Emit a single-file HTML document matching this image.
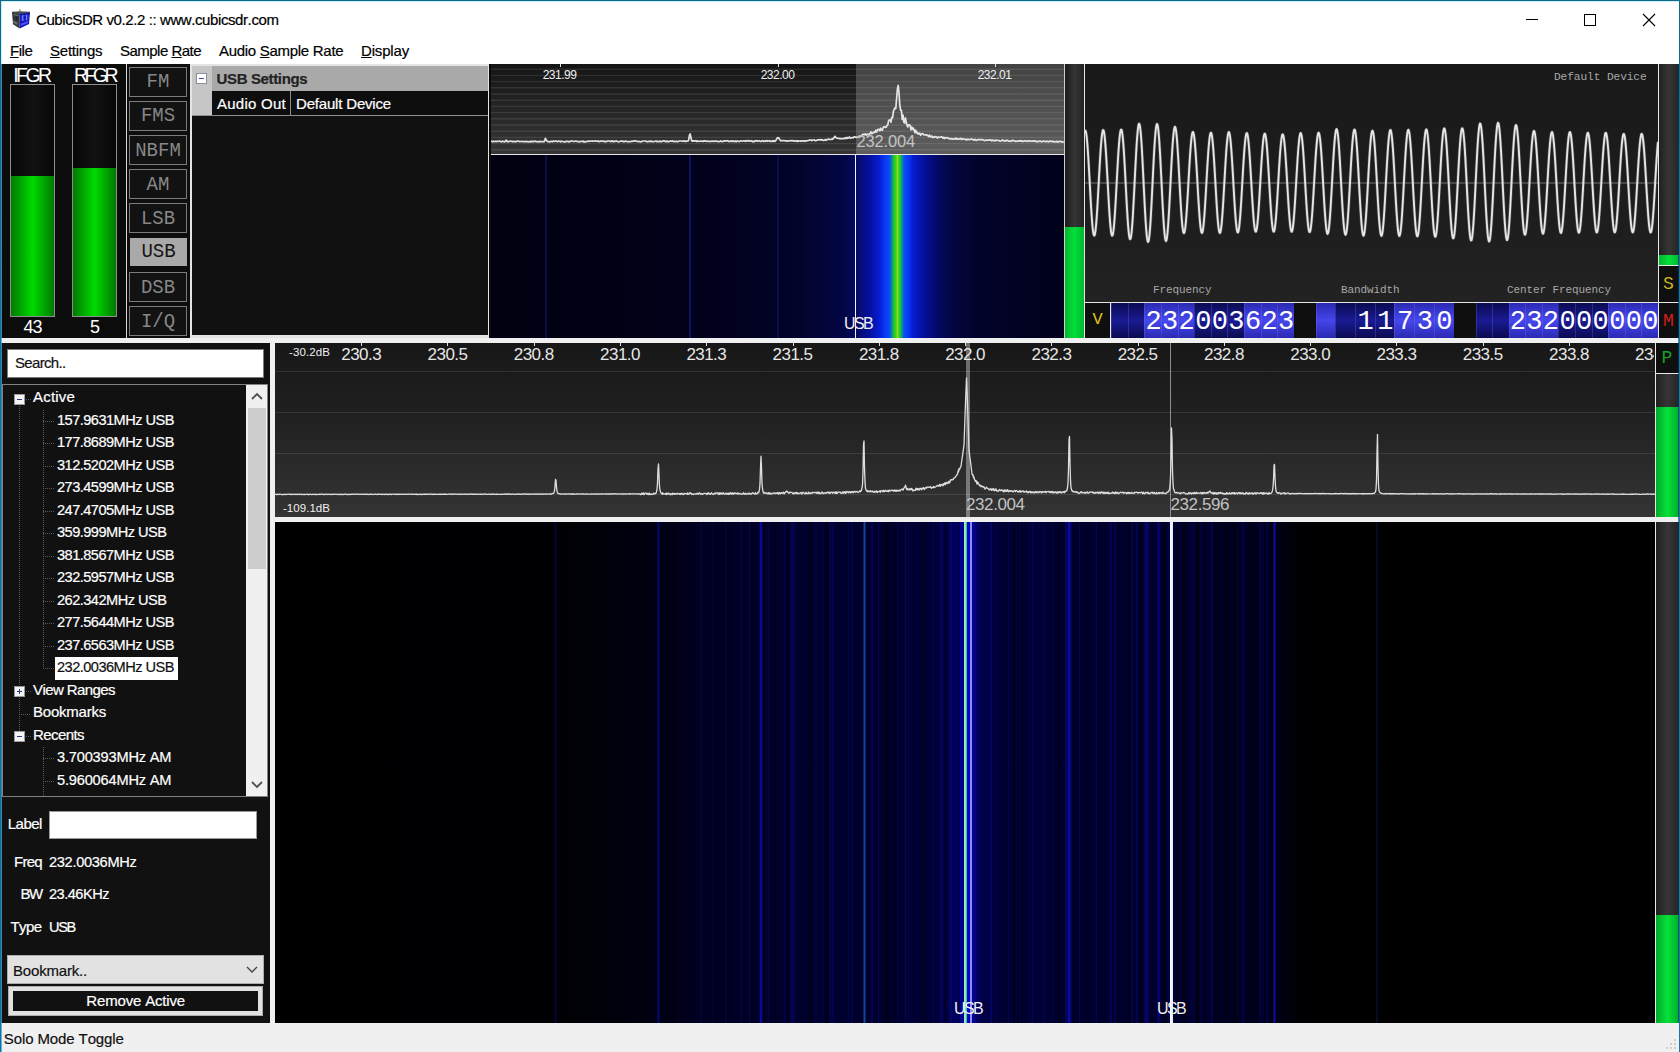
<!DOCTYPE html><html><head><meta charset="utf-8"><title>CubicSDR</title><style>
*{box-sizing:border-box;margin:0;padding:0}
html,body{width:1680px;height:1052px;overflow:hidden;background:#fff}
body{position:relative;font-family:"Liberation Sans",sans-serif;font-size:14px;color:#000}
.a{position:absolute}
.ui{font-family:"Liberation Sans",sans-serif;font-size:14.3px;letter-spacing:-0.35px;white-space:nowrap;font-kerning:none;-webkit-text-stroke:0.2px currentColor}
.mono{font-family:"Liberation Mono",monospace;white-space:nowrap}
.gl{font-family:"Liberation Sans",sans-serif;white-space:nowrap}
.ui span.u{text-decoration:underline}
.mb{position:absolute;left:129px;width:58px;height:30px;border:1px solid #7b7b7b;color:#878787;
 font-family:"Liberation Mono",monospace;font-size:19px;line-height:28px;text-align:center;background:#121212}
.mb.sel{background:#a9a9a9;color:#141414;border-color:#a9a9a9;left:130px;width:57px;height:28.4px;line-height:27px}
.ti{position:absolute;left:0;height:22.5px;line-height:22px;color:#fff}
.dig{position:absolute;top:0;height:34px;text-align:center;color:#fff;font-family:"Liberation Mono",monospace;
 font-size:27px;line-height:38px;border-left:1px solid rgba(120,120,255,.28)}
.dk{background:linear-gradient(#0b0b52,#1a1a92 50%,#0b0b52)}
.lt{background:linear-gradient(#2a2ab2,#4747ee 50%,#2a2ab2)}
.hv{background:linear-gradient(#2a2ab2,#4545ea 50%,#2a2ab2)}
.lab{position:absolute;color:#a8a8a8;font-family:"Liberation Mono",monospace;font-size:11px;letter-spacing:-0.1px;white-space:nowrap}
.fl{position:absolute;color:#e6e6e6;font-family:"Liberation Sans",sans-serif;font-size:17px;letter-spacing:-0.55px;white-space:nowrap;transform:translateX(-50%)}
.sfl{position:absolute;color:#f0f0f0;font-family:"Liberation Sans",sans-serif;font-size:11px;letter-spacing:-0.4px;white-space:nowrap;transform:translateX(-50%)}
</style></head><body>
<div class="a" style="left:0;top:0;width:1680px;height:1052px;background:#fff"></div>
<svg class="a" style="left:11px;top:8px" width="20" height="22" viewBox="0 0 20 22">
<rect x="8.4" y="1" width="1.1" height="3.6" fill="#8c7c7c"/>
<polygon points="1,3.8 9,3.2 19,3.8 19,5.4 8.6,6.6 1,5.4" fill="#4b4f51"/>
<polygon points="1,4.6 8.6,6.1 8.6,20.6 2,16.2" fill="#33373a"/>
<polygon points="2.6,6.1 7.4,7 7.4,8 2.6,7.1" fill="#8a9496" opacity=".75"/>
<polygon points="2.2,12.6 6.4,14.6 6.4,17 2.4,14.8" fill="#777b7d" opacity=".8"/>
<rect x="4.6" y="8.6" width="1.6" height="3.4" fill="#1c1e22"/>
<polygon points="8.6,6.1 19,4.6 18,16 8.6,20.6" fill="#1212a6"/>
<polygon points="9.6,7.5 17.8,6.4 17.5,12 9.6,13" fill="#2636d8"/>
<rect x="11.3" y="7.2" width="1.2" height="5.6" fill="#7f99ff"/>
<rect x="14.9" y="6.8" width="1.1" height="5.4" fill="#6f8cff"/>
<rect x="12.6" y="8.3" width="2.2" height="3.2" fill="#1616b4"/>
<polygon points="9.6,15.6 17.3,12.8 17.2,15 9.6,18.2" fill="#4a4aff"/>
</svg>
<div class="a ui" style="left:36px;top:10px;font-size:15px;letter-spacing:-0.407px;line-height:20px;color:#000;">CubicSDR v0.2.2 :: www.cubicsdr.com</div>
<div class="a" style="left:1526px;top:19px;width:12px;height:1px;background:#000"></div>
<div class="a" style="left:1584px;top:14px;width:12px;height:12px;border:1px solid #000"></div>
<svg class="a" style="left:1642px;top:13px" width="14" height="14" viewBox="0 0 14 14"><path d="M1 1 L13 13 M13 1 L1 13" stroke="#000" stroke-width="1.1" fill="none"/></svg>
<div class="a ui" style="left:10px;top:41px;font-size:15px;letter-spacing:-0.468px;line-height:20px;color:#000;text-underline-offset:1px;"><span class="u">F</span>ile</div>
<div class="a ui" style="left:50px;top:41px;font-size:15px;letter-spacing:-0.237px;line-height:20px;color:#000;text-underline-offset:1px;"><span class="u">S</span>ettings</div>
<div class="a ui" style="left:120px;top:41px;font-size:15px;letter-spacing:-0.519px;line-height:20px;color:#000;text-underline-offset:1px;">Sample <span class="u">R</span>ate</div>
<div class="a ui" style="left:219px;top:41px;font-size:15px;letter-spacing:-0.291px;line-height:20px;color:#000;text-underline-offset:1px;">Audio <span class="u">S</span>ample Rate</div>
<div class="a ui" style="left:361px;top:41px;font-size:15px;letter-spacing:-0.169px;line-height:20px;color:#000;text-underline-offset:1px;"><span class="u">D</span>isplay</div>
<div class="a" style="left:1px;top:64px;width:1678px;height:274px;background:#0f0f0f"></div>
<div class="a" style="left:1px;top:64px;width:125px;height:274px;background:#0c0c0c"></div>
<div class="a" style="left:126px;top:64px;width:1px;height:274px;background:#d8d8d8"></div>
<div class="a gl" style="left:13.2px;top:64px;color:#fff;font-size:19.5px;letter-spacing:-2.52px;line-height:22px;font-kerning:none">IFGR</div>
<div class="a" style="left:10px;top:84px;width:45px;height:233px;border:1px solid #8e8e8e;background:linear-gradient(90deg,#070707,#121212 50%,#070707)"></div>
<div class="a" style="left:11px;top:176px;width:43px;height:140px;background:linear-gradient(90deg,#017a01,#00da00 50%,#017a01)"></div>
<div class="a gl" style="left:12.5px;top:316px;width:40px;text-align:center;color:#fff;font-size:18px;letter-spacing:-1px;line-height:22px">43</div>
<div class="a gl" style="left:74px;top:64px;color:#fff;font-size:19.5px;letter-spacing:-3.56px;line-height:22px;font-kerning:none">RFGR</div>
<div class="a" style="left:72px;top:84px;width:45px;height:233px;border:1px solid #8e8e8e;background:linear-gradient(90deg,#070707,#121212 50%,#070707)"></div>
<div class="a" style="left:73px;top:168px;width:43px;height:148px;background:linear-gradient(90deg,#017a01,#00da00 50%,#017a01)"></div>
<div class="a gl" style="left:74.5px;top:316px;width:40px;text-align:center;color:#fff;font-size:18px;letter-spacing:-1px;line-height:22px">5</div>
<div class="a" style="left:127px;top:64px;width:63px;height:274px;background:#0e0e0e"></div>
<div class="mb" style="top:66.5px"><span style="display:inline-block;transform:scaleY(1.1)">FM</span></div>
<div class="mb" style="top:100.7px"><span style="display:inline-block;transform:scaleY(1.1)">FMS</span></div>
<div class="mb" style="top:134.9px"><span style="display:inline-block;transform:scaleY(1.1)">NBFM</span></div>
<div class="mb" style="top:169.1px"><span style="display:inline-block;transform:scaleY(1.1)">AM</span></div>
<div class="mb" style="top:203.3px"><span style="display:inline-block;transform:scaleY(1.1)">LSB</span></div>
<div class="mb sel" style="top:237.5px"><span style="display:inline-block;transform:scaleY(1.1)">USB</span></div>
<div class="mb" style="top:271.7px"><span style="display:inline-block;transform:scaleY(1.1)">DSB</span></div>
<div class="mb" style="top:305.9px"><span style="display:inline-block;transform:scaleY(1.1)">I/Q</span></div>
<div class="a" style="left:190px;top:64px;width:300px;height:274px;background:#e4e4e4"></div>
<div class="a" style="left:192px;top:66px;width:296px;height:269px;background:#111"></div>
<div class="a" style="left:192px;top:66px;width:20px;height:49px;background:#c6c6c6"></div>
<div class="a" style="left:212px;top:66px;width:276px;height:25px;background:#a9a9a9"></div>
<div class="a" style="left:196px;top:73px;width:11px;height:11px;border:1px solid #8a8fa0;background:#fff"></div>
<div class="a" style="left:199px;top:78px;width:5px;height:1px;background:#3c4a9a"></div>
<div class="a ui" style="left:216.5px;top:68px;font-size:15px;letter-spacing:-0.351px;line-height:21px;color:#222;font-weight:bold;">USB Settings</div>
<div class="a" style="left:212px;top:91px;width:276px;height:24px;background:#0e0e0e"></div>
<div class="a" style="left:192px;top:115px;width:296px;height:1px;background:#8e8e8e"></div>
<div class="a" style="left:290px;top:91px;width:1px;height:24px;background:#8e8e8e"></div>
<div class="a ui" style="left:217px;top:93px;font-size:15px;letter-spacing:0.255px;line-height:21px;color:#fff;">Audio Out</div>
<div class="a ui" style="left:296px;top:93px;font-size:15px;letter-spacing:-0.182px;line-height:21px;color:#fff;">Default Device</div>
<div class="a" style="left:489px;top:64px;width:2px;height:274px;background:#0a0a0a"></div>
<div class="a" style="left:491px;top:64px;width:573px;height:91px;background:repeating-linear-gradient(180deg,rgba(255,255,255,0) 0px,rgba(255,255,255,0) 4.2px,rgba(255,255,255,.095) 4.9px,rgba(255,255,255,.095) 5.6px,rgba(255,255,255,0) 6.2px),linear-gradient(180deg,#151515,#363636)"></div>
<div class="a" style="left:856px;top:64px;width:208px;height:91px;background:rgba(255,255,255,.2)"></div>
<svg class="a" style="left:491px;top:64px" width="573" height="91" viewBox="0 0 573 91"><path d="M0.0 77.4 L0.8 77.3 L1.6 77.7 L2.4 77.2 L3.2 77.6 L4.0 77.5 L4.8 77.2 L5.6 77.6 L6.4 77.2 L7.2 77.5 L8.0 77.2 L8.8 77.2 L9.6 77.5 L10.4 77.9 L11.2 77.2 L12.0 77.3 L12.8 77.7 L13.6 77.9 L14.4 76.8 L15.2 76.1 L16.0 77.7 L16.8 77.1 L17.6 77.9 L18.4 77.4 L19.2 77.2 L20.0 77.2 L20.8 77.4 L21.6 77.8 L22.4 77.3 L23.2 77.6 L24.0 77.7 L24.8 77.4 L25.6 77.6 L26.4 77.2 L27.2 77.1 L28.0 77.3 L28.8 77.7 L29.6 77.5 L30.4 77.4 L31.2 77.6 L32.0 77.5 L32.8 77.4 L33.6 77.8 L34.4 77.7 L35.2 77.3 L36.0 77.6 L36.8 77.6 L37.6 77.9 L38.4 77.7 L39.2 77.3 L40.0 78.0 L40.8 77.2 L41.6 77.4 L42.4 77.8 L43.2 77.2 L44.0 77.5 L44.8 77.1 L45.6 77.7 L46.4 77.8 L47.2 77.6 L48.0 77.9 L48.8 77.3 L49.6 77.7 L50.4 77.6 L51.2 77.6 L52.0 77.5 L52.8 77.8 L53.6 77.0 L54.4 74.3 L55.2 76.2 L56.0 77.0 L56.8 77.7 L57.6 77.6 L58.4 77.9 L59.2 77.8 L60.0 77.3 L60.8 77.4 L61.6 77.6 L62.4 77.0 L63.2 77.4 L64.0 77.2 L64.8 77.1 L65.6 77.1 L66.4 77.7 L67.2 77.1 L68.0 77.2 L68.8 77.4 L69.6 77.8 L70.4 77.1 L71.2 77.4 L72.0 77.5 L72.8 77.8 L73.6 77.8 L74.4 77.8 L75.2 77.2 L76.0 77.4 L76.8 77.3 L77.6 77.8 L78.4 77.9 L79.2 77.1 L80.0 77.1 L80.8 77.2 L81.6 77.2 L82.4 77.4 L83.2 77.5 L84.0 77.2 L84.8 77.0 L85.6 77.4 L86.4 77.3 L87.2 77.5 L88.0 77.9 L88.8 77.6 L89.6 77.4 L90.4 77.5 L91.2 77.6 L92.0 77.0 L92.8 77.8 L93.6 77.7 L94.4 77.8 L95.2 77.7 L96.0 77.3 L96.8 77.3 L97.6 77.0 L98.4 77.5 L99.2 77.0 L100.0 77.0 L100.8 77.1 L101.6 77.1 L102.4 77.3 L103.2 77.0 L104.0 76.9 L104.8 77.1 L105.6 77.0 L106.4 77.3 L107.2 76.9 L108.0 77.7 L108.8 77.5 L109.6 77.1 L110.4 77.2 L111.2 77.2 L112.0 77.3 L112.8 77.0 L113.6 77.7 L114.4 77.8 L115.2 77.3 L116.0 77.4 L116.8 77.0 L117.6 77.0 L118.4 77.2 L119.2 77.1 L120.0 77.7 L120.8 77.0 L121.6 76.9 L122.4 77.8 L123.2 77.4 L124.0 77.0 L124.8 77.4 L125.6 76.9 L126.4 77.4 L127.2 77.8 L128.0 77.7 L128.8 77.5 L129.6 77.1 L130.4 77.2 L131.2 77.0 L132.0 77.6 L132.8 77.4 L133.6 77.6 L134.4 77.2 L135.2 77.1 L136.0 77.6 L136.8 77.8 L137.6 77.7 L138.4 77.6 L139.2 77.6 L140.0 77.6 L140.8 77.1 L141.6 77.3 L142.4 77.2 L143.2 76.9 L144.0 76.9 L144.8 77.1 L145.6 77.1 L146.4 77.5 L147.2 77.7 L148.0 77.3 L148.8 77.7 L149.6 77.8 L150.4 77.7 L151.2 77.2 L152.0 77.0 L152.8 77.0 L153.6 77.0 L154.4 77.0 L155.2 77.4 L156.0 77.7 L156.8 77.6 L157.6 77.3 L158.4 77.4 L159.2 77.6 L160.0 76.9 L160.8 77.4 L161.6 77.7 L162.4 77.6 L163.2 77.5 L164.0 77.3 L164.8 77.0 L165.6 77.6 L166.4 77.1 L167.2 77.6 L168.0 77.7 L168.8 77.2 L169.6 77.2 L170.4 77.7 L171.2 77.5 L172.0 76.9 L172.8 76.9 L173.6 76.9 L174.4 77.7 L175.2 77.6 L176.0 76.9 L176.8 77.6 L177.6 77.7 L178.4 77.4 L179.2 77.1 L180.0 77.3 L180.8 76.9 L181.6 76.8 L182.4 77.7 L183.2 77.4 L184.0 77.3 L184.8 77.7 L185.6 77.2 L186.4 77.6 L187.2 77.6 L188.0 77.0 L188.8 77.0 L189.6 77.0 L190.4 77.0 L191.2 77.3 L192.0 77.0 L192.8 77.1 L193.6 76.9 L194.4 77.6 L195.2 77.1 L196.0 77.2 L196.8 77.2 L197.6 76.4 L198.4 71.4 L199.2 69.9 L200.0 74.1 L200.8 76.9 L201.6 77.2 L202.4 76.7 L203.2 77.1 L204.0 76.9 L204.8 76.7 L205.6 77.5 L206.4 76.9 L207.2 77.2 L208.0 77.4 L208.8 77.2 L209.6 77.0 L210.4 77.2 L211.2 77.2 L212.0 77.5 L212.8 76.8 L213.6 77.2 L214.4 76.9 L215.2 77.0 L216.0 77.4 L216.8 77.2 L217.6 77.2 L218.4 77.4 L219.2 77.6 L220.0 77.1 L220.8 77.3 L221.6 77.2 L222.4 77.2 L223.2 77.4 L224.0 77.1 L224.8 77.2 L225.6 77.1 L226.4 77.6 L227.2 77.4 L228.0 77.5 L228.8 77.6 L229.6 76.9 L230.4 77.2 L231.2 77.6 L232.0 77.5 L232.8 76.8 L233.6 76.8 L234.4 77.1 L235.2 76.7 L236.0 76.9 L236.8 76.7 L237.6 77.3 L238.4 77.4 L239.2 77.5 L240.0 76.8 L240.8 77.3 L241.6 77.3 L242.4 76.8 L243.2 77.5 L244.0 77.6 L244.8 76.8 L245.6 77.6 L246.4 77.0 L247.2 77.1 L248.0 77.6 L248.8 77.4 L249.6 76.8 L250.4 77.0 L251.2 77.1 L252.0 77.0 L252.8 76.8 L253.6 76.9 L254.4 77.3 L255.2 76.6 L256.0 77.2 L256.8 77.0 L257.6 76.6 L258.4 76.9 L259.2 77.2 L260.0 77.1 L260.8 76.7 L261.6 77.6 L262.4 77.4 L263.2 77.6 L264.0 76.7 L264.8 76.9 L265.6 76.6 L266.4 77.4 L267.2 76.9 L268.0 76.7 L268.8 77.0 L269.6 77.5 L270.4 77.4 L271.2 76.8 L272.0 76.7 L272.8 77.5 L273.6 77.1 L274.4 77.3 L275.2 76.7 L276.0 76.6 L276.8 77.3 L277.6 77.0 L278.4 76.6 L279.2 77.5 L280.0 77.2 L280.8 77.4 L281.6 76.6 L282.4 77.4 L283.2 76.6 L284.0 77.3 L284.8 76.5 L285.6 75.1 L286.4 73.8 L287.2 73.7 L288.0 74.3 L288.8 75.6 L289.6 76.8 L290.4 76.7 L291.2 76.6 L292.0 76.7 L292.8 76.6 L293.6 76.7 L294.4 76.8 L295.2 76.8 L296.0 77.3 L296.8 76.8 L297.6 77.0 L298.4 76.7 L299.2 76.9 L300.0 76.5 L300.8 76.8 L301.6 76.5 L302.4 77.2 L303.2 77.1 L304.0 76.7 L304.8 77.0 L305.6 77.4 L306.4 76.6 L307.2 77.3 L308.0 76.9 L308.8 77.0 L309.6 77.3 L310.4 76.8 L311.2 76.9 L312.0 77.1 L312.8 77.3 L313.6 76.6 L314.4 77.1 L315.2 76.9 L316.0 76.8 L316.8 76.5 L317.6 76.4 L318.4 76.1 L319.2 76.1 L320.0 76.0 L320.8 76.7 L321.6 76.1 L322.4 76.0 L323.2 75.9 L324.0 76.7 L324.8 76.7 L325.6 76.4 L326.4 75.9 L327.2 75.9 L328.0 75.9 L328.8 76.0 L329.6 75.6 L330.4 75.9 L331.2 75.7 L332.0 76.5 L332.8 76.5 L333.6 75.9 L334.4 75.5 L335.2 76.3 L336.0 75.5 L336.8 75.5 L337.6 75.0 L338.4 75.5 L339.2 75.5 L340.0 75.5 L340.8 75.0 L341.6 75.3 L342.4 74.2 L343.2 73.5 L344.0 72.3 L344.8 73.5 L345.6 74.0 L346.4 74.2 L347.2 74.5 L348.0 74.3 L348.8 74.7 L349.6 74.6 L350.4 74.8 L351.2 74.6 L352.0 74.6 L352.8 74.8 L353.6 74.0 L354.4 73.8 L355.2 74.7 L356.0 73.4 L356.8 74.2 L357.6 74.0 L358.4 72.9 L359.2 74.1 L360.0 74.1 L360.8 73.6 L361.6 73.7 L362.4 73.8 L363.2 72.6 L364.0 73.1 L364.8 73.0 L365.6 73.4 L366.4 73.2 L367.2 73.0 L368.0 72.4 L368.8 72.8 L369.6 72.2 L370.4 72.0 L371.2 70.9 L372.0 70.3 L372.8 70.3 L373.6 70.6 L374.4 69.8 L375.2 71.2 L376.0 70.4 L376.8 70.3 L377.6 70.2 L378.4 70.1 L379.2 69.4 L380.0 67.9 L380.8 69.7 L381.6 69.3 L382.4 68.3 L383.2 68.2 L384.0 68.3 L384.8 66.2 L385.6 68.0 L386.4 66.1 L387.2 65.2 L388.0 65.6 L388.8 66.8 L389.6 64.2 L390.4 65.9 L391.2 66.4 L392.0 63.9 L392.8 62.8 L393.6 62.8 L394.4 63.3 L395.2 63.2 L396.0 61.5 L396.8 60.8 L397.6 56.6 L398.4 56.0 L399.2 55.8 L400.0 58.2 L400.8 53.3 L401.6 53.6 L402.4 47.4 L403.2 45.5 L404.0 43.9 L404.8 44.5 L405.6 34.7 L406.4 25.2 L407.2 21.4 L408.0 29.0 L408.8 41.0 L409.6 46.1 L410.4 46.4 L411.2 55.4 L412.0 51.2 L412.8 58.2 L413.6 59.0 L414.4 53.9 L415.2 58.0 L416.0 61.2 L416.8 62.9 L417.6 60.8 L418.4 60.9 L419.2 61.5 L420.0 65.8 L420.8 63.0 L421.6 65.3 L422.4 64.2 L423.2 66.4 L424.0 68.7 L424.8 66.2 L425.6 69.0 L426.4 68.5 L427.2 70.1 L428.0 70.0 L428.8 69.2 L429.6 71.3 L430.4 70.4 L431.2 69.5 L432.0 69.6 L432.8 70.9 L433.6 71.0 L434.4 70.8 L435.2 70.7 L436.0 71.3 L436.8 71.4 L437.6 72.6 L438.4 71.1 L439.2 72.7 L440.0 73.0 L440.8 71.9 L441.6 73.4 L442.4 73.1 L443.2 73.5 L444.0 72.5 L444.8 72.8 L445.6 72.9 L446.4 74.0 L447.2 73.4 L448.0 73.1 L448.8 73.3 L449.6 73.1 L450.4 72.8 L451.2 73.0 L452.0 74.2 L452.8 73.4 L453.6 74.5 L454.4 73.5 L455.2 73.7 L456.0 74.1 L456.8 73.7 L457.6 74.0 L458.4 75.0 L459.2 74.9 L460.0 74.9 L460.8 74.6 L461.6 75.1 L462.4 75.2 L463.2 74.7 L464.0 75.0 L464.8 74.1 L465.6 75.1 L466.4 74.7 L467.2 75.2 L468.0 75.1 L468.8 74.7 L469.6 74.4 L470.4 75.6 L471.2 74.6 L472.0 75.1 L472.8 75.0 L473.6 75.0 L474.4 75.6 L475.2 76.0 L476.0 75.1 L476.8 75.7 L477.6 75.3 L478.4 75.6 L479.2 75.5 L480.0 75.2 L480.8 75.2 L481.6 75.3 L482.4 76.2 L483.2 75.7 L484.0 75.4 L484.8 76.3 L485.6 76.4 L486.4 75.8 L487.2 75.5 L488.0 75.6 L488.8 75.5 L489.6 75.8 L490.4 75.5 L491.2 75.7 L492.0 75.8 L492.8 76.2 L493.6 76.6 L494.4 76.4 L495.2 76.1 L496.0 76.1 L496.8 76.3 L497.6 76.1 L498.4 76.1 L499.2 75.8 L500.0 76.1 L500.8 76.9 L501.6 76.0 L502.4 76.4 L503.2 76.6 L504.0 76.9 L504.8 76.2 L505.6 76.3 L506.4 76.3 L507.2 76.5 L508.0 76.5 L508.8 77.1 L509.6 77.0 L510.4 77.0 L511.2 76.1 L512.0 76.2 L512.8 76.9 L513.6 77.1 L514.4 76.7 L515.2 76.8 L516.0 76.2 L516.8 76.6 L517.6 77.2 L518.4 77.1 L519.2 77.2 L520.0 77.3 L520.8 76.6 L521.6 76.4 L522.4 76.5 L523.2 76.9 L524.0 77.1 L524.8 77.4 L525.6 77.2 L526.4 77.1 L527.2 77.2 L528.0 76.9 L528.8 77.0 L529.6 76.5 L530.4 77.3 L531.2 76.8 L532.0 77.5 L532.8 77.2 L533.6 76.9 L534.4 76.7 L535.2 76.9 L536.0 77.3 L536.8 77.4 L537.6 76.8 L538.4 76.8 L539.2 77.2 L540.0 77.3 L540.8 77.1 L541.6 77.0 L542.4 77.3 L543.2 76.8 L544.0 77.1 L544.8 77.2 L545.6 77.7 L546.4 77.4 L547.2 77.7 L548.0 77.3 L548.8 77.1 L549.6 77.1 L550.4 77.8 L551.2 77.6 L552.0 77.2 L552.8 77.0 L553.6 77.4 L554.4 77.6 L555.2 77.4 L556.0 77.2 L556.8 77.6 L557.6 77.9 L558.4 77.2 L559.2 77.1 L560.0 77.4 L560.8 77.4 L561.6 77.7 L562.4 77.3 L563.2 77.8 L564.0 77.8 L564.8 77.6 L565.6 77.3 L566.4 78.0 L567.2 77.4 L568.0 77.9 L568.8 77.4 L569.6 77.4 L570.4 77.9 L571.2 77.5 L572.0 78.1 L572.8 77.7" fill="none" stroke="#ececec" stroke-width="1.7" stroke-linejoin="round" opacity=".95"/></svg>
<div class="a" style="left:560px;top:64px;width:1px;height:3px;background:#ddd"></div>
<div class="sfl" style="left:559.5px;top:68px;line-height:14px;font-size:12px;font-kerning:none;letter-spacing:-0.52px">231.99</div>
<div class="a" style="left:778px;top:64px;width:1px;height:3px;background:#ddd"></div>
<div class="sfl" style="left:777.5px;top:68px;line-height:14px;font-size:12px;font-kerning:none;letter-spacing:-0.52px">232.00</div>
<div class="a" style="left:995px;top:64px;width:1px;height:3px;background:#ddd"></div>
<div class="sfl" style="left:994.5px;top:68px;line-height:14px;font-size:12px;font-kerning:none;letter-spacing:-0.52px">232.01</div>
<div class="a gl" style="left:856.5px;top:132px;font-size:16.5px;letter-spacing:-0.16px;line-height:18px;color:#c4c4c4;font-kerning:none">232.004</div>
<div class="a" style="left:491px;top:154px;width:573px;height:1px;background:#e8e8e8"></div>
<div class="a" style="left:491px;top:155px;width:573px;height:183px;background:linear-gradient(90deg,#010112 0.0px,#010116 129.0px,#020222 269.0px,#030430 319.0px,#030646 354.0px,#040a62 365.0px,#0510a0 379.0px,#061cd0 388.0px,#0834f4 393.0px,#0850f0 399.0px,#0a90a0 401.0px,#14c428 402.5px,#58d41c 405.5px,#a4e022 406.3px,#58d41c 407.2px,#14c428 409.5px,#0a90a0 411.0px,#0850f0 413.0px,#0834f4 418.0px,#061cd0 422.0px,#0512a4 431.0px,#040a70 443.0px,#030644 459.0px,#02032c 484.0px,#01011a 573.0px)"></div>
<div class="a" style="left:545px;top:155px;width:2px;height:183px;background:rgba(30,40,160,.35)"></div>
<div class="a" style="left:689px;top:155px;width:2px;height:183px;background:rgba(30,40,170,.45)"></div>
<div class="a" style="left:777px;top:155px;width:2px;height:183px;background:rgba(30,40,170,.3)"></div>
<div class="a" style="left:855px;top:155px;width:1px;height:183px;background:#f2f2f2"></div>
<div class="a gl" style="left:844px;top:315px;font-size:16px;letter-spacing:-1.6px;line-height:18px;color:#f0f0f0">USB</div>
<div class="a" style="left:1064px;top:64px;width:1px;height:274px;background:#cfcfcf"></div>
<div class="a" style="left:1065px;top:64px;width:19px;height:274px;background:linear-gradient(90deg,#1c1c1c,#343434 50%,#222)"></div>
<div class="a" style="left:1065px;top:227px;width:19px;height:111px;background:linear-gradient(90deg,#00b82c,#04de3c 50%,#00b82c)"></div>
<div class="a" style="left:1084px;top:64px;width:1px;height:274px;background:#e6e6e6"></div>
<div class="a" style="left:1085px;top:64px;width:573px;height:238px;background:linear-gradient(180deg,#191919,#1d1d1d 60%,#222222)"></div>
<div class="a" style="left:1085px;top:182px;width:573px;height:1.6px;background:#464646"></div>
<svg class="a" style="left:1085px;top:64px" width="573" height="238" viewBox="0 0 573 238"><path d="M0.0 66.7 L0.5 66.7 L1.0 68.3 L1.5 71.4 L2.0 76.0 L2.5 81.9 L3.0 89.0 L3.5 97.0 L4.0 105.6 L4.5 114.7 L5.0 123.9 L5.5 132.9 L6.0 141.5 L6.5 149.5 L7.0 156.5 L7.5 162.4 L8.0 166.9 L8.5 170.0 L9.0 171.5 L9.5 171.5 L10.0 169.8 L10.5 166.5 L11.0 161.8 L11.5 155.8 L12.0 148.7 L12.5 140.7 L13.0 131.9 L13.5 122.8 L14.0 113.6 L14.5 104.5 L15.0 95.9 L15.5 88.0 L16.0 81.0 L16.5 75.1 L17.0 70.6 L17.5 67.6 L18.0 66.1 L18.5 66.3 L19.0 68.0 L19.5 71.3 L20.0 76.1 L20.5 82.2 L21.0 89.4 L21.5 97.4 L22.0 106.2 L22.5 115.3 L23.0 124.6 L23.5 133.6 L24.0 142.2 L24.5 150.1 L25.0 157.1 L25.5 162.9 L26.0 167.3 L26.5 170.2 L27.0 171.6 L27.5 171.5 L28.0 169.7 L28.5 166.4 L29.0 161.6 L29.5 155.5 L30.0 148.3 L30.5 140.2 L31.0 131.3 L31.5 122.2 L32.0 112.8 L32.5 103.7 L33.0 95.0 L33.5 87.1 L34.0 80.1 L34.5 74.3 L35.0 69.8 L35.5 66.9 L36.0 65.6 L36.5 65.7 L37.0 67.6 L37.5 71.0 L38.0 75.9 L38.5 82.2 L39.0 89.6 L39.5 98.0 L40.0 107.1 L40.5 116.6 L41.0 126.2 L41.5 135.6 L42.0 144.6 L42.5 152.9 L43.0 160.2 L43.5 166.2 L44.0 170.8 L44.5 173.9 L45.0 175.2 L45.5 174.9 L46.0 172.8 L46.5 169.1 L47.0 163.8 L47.5 157.1 L48.0 149.2 L48.5 140.4 L49.0 130.8 L49.5 120.8 L50.0 110.7 L50.5 100.9 L51.0 91.5 L51.5 82.9 L52.0 75.3 L52.5 69.1 L53.0 64.3 L53.5 61.1 L54.0 59.7 L54.5 60.3 L55.0 62.6 L55.5 66.6 L56.0 72.2 L56.5 79.2 L57.0 87.5 L57.5 96.7 L58.0 106.5 L58.5 116.8 L59.0 127.1 L59.5 137.1 L60.0 146.6 L60.5 155.3 L61.0 162.8 L61.5 169.0 L62.0 173.7 L62.5 176.7 L63.0 178.0 L63.5 177.3 L64.0 174.9 L64.5 170.7 L65.0 165.0 L65.5 157.9 L66.0 149.5 L66.5 140.3 L67.0 130.4 L67.5 120.1 L68.0 109.8 L68.5 99.8 L69.0 90.4 L69.5 81.9 L70.0 74.5 L70.5 68.4 L71.0 63.9 L71.5 61.1 L72.0 60.0 L72.5 60.8 L73.0 63.4 L73.5 67.6 L74.0 73.4 L74.5 80.6 L75.0 88.9 L75.5 98.2 L76.0 108.0 L76.5 118.2 L77.0 128.4 L77.5 138.3 L78.0 147.5 L78.5 155.9 L79.0 163.1 L79.5 169.0 L80.0 173.4 L80.5 176.1 L81.0 177.0 L81.5 176.0 L82.0 173.3 L82.5 168.9 L83.0 163.0 L83.5 155.8 L84.0 147.5 L84.5 138.4 L85.0 128.7 L85.5 118.8 L86.0 108.9 L86.5 99.4 L87.0 90.5 L87.5 82.5 L88.0 75.6 L88.5 70.1 L89.0 66.0 L89.5 63.6 L90.0 62.8 L90.5 63.8 L91.0 66.4 L91.5 70.6 L92.0 76.2 L92.5 83.0 L93.0 90.8 L93.5 99.4 L94.0 108.5 L94.5 117.9 L95.0 127.1 L95.5 136.0 L96.0 144.3 L96.5 151.7 L97.0 158.0 L97.5 163.0 L98.0 166.6 L98.5 168.7 L99.0 169.2 L99.5 168.1 L100.0 165.7 L100.5 161.8 L101.0 156.6 L101.5 150.2 L102.0 142.8 L102.5 134.7 L103.0 126.0 L103.5 117.2 L104.0 108.4 L104.5 99.9 L105.0 92.0 L105.5 84.9 L106.0 78.8 L106.5 74.0 L107.0 70.5 L107.5 68.5 L108.0 68.0 L108.5 69.0 L109.0 71.4 L109.5 75.3 L110.0 80.5 L110.5 86.9 L111.0 94.2 L111.5 102.3 L112.0 110.9 L112.5 119.7 L113.0 128.5 L113.5 136.9 L114.0 144.8 L114.5 151.9 L115.0 158.0 L115.5 162.9 L116.0 166.4 L116.5 168.4 L117.0 169.0 L117.5 168.0 L118.0 165.5 L118.5 161.5 L119.0 156.3 L119.5 149.9 L120.0 142.6 L120.5 134.5 L121.0 126.0 L121.5 117.2 L122.0 108.5 L122.5 100.1 L123.0 92.3 L123.5 85.3 L124.0 79.3 L124.5 74.5 L125.0 71.1 L125.5 69.2 L126.0 68.7 L126.5 69.8 L127.0 72.3 L127.5 76.3 L128.0 81.6 L128.5 88.0 L129.0 95.4 L129.5 103.4 L130.0 112.0 L130.5 120.7 L131.0 129.4 L131.5 137.8 L132.0 145.6 L132.5 152.6 L133.0 158.6 L133.5 163.3 L134.0 166.7 L134.5 168.6 L135.0 169.0 L135.5 167.8 L136.0 165.1 L136.5 161.0 L137.0 155.6 L137.5 149.1 L138.0 141.7 L138.5 133.5 L139.0 124.9 L139.5 116.1 L140.0 107.4 L140.5 99.0 L141.0 91.2 L141.5 84.2 L142.0 78.3 L142.5 73.6 L143.0 70.3 L143.5 68.4 L144.0 68.1 L144.5 69.3 L145.0 72.1 L145.5 76.2 L146.0 81.7 L146.5 88.3 L147.0 95.7 L147.5 103.9 L148.0 112.5 L148.5 121.3 L149.0 130.0 L149.5 138.3 L150.0 146.0 L150.5 152.9 L151.0 158.7 L151.5 163.3 L152.0 166.5 L152.5 168.2 L153.0 168.4 L153.5 167.1 L154.0 164.3 L154.5 160.1 L155.0 154.6 L155.5 148.1 L156.0 140.6 L156.5 132.5 L157.0 124.0 L157.5 115.3 L158.0 106.7 L158.5 98.5 L159.0 90.9 L159.5 84.1 L160.0 78.4 L160.5 74.0 L161.0 70.9 L161.5 69.2 L162.0 69.1 L162.5 70.5 L163.0 73.3 L163.5 77.6 L164.0 83.0 L164.5 89.6 L165.0 97.0 L165.5 105.1 L166.0 113.6 L166.5 122.2 L167.0 130.8 L167.5 138.9 L168.0 146.4 L168.5 153.1 L169.0 158.7 L169.5 163.0 L170.0 166.0 L170.5 167.6 L171.0 167.6 L171.5 166.2 L172.0 163.3 L172.5 159.1 L173.0 153.6 L173.5 147.1 L174.0 139.6 L174.5 131.6 L175.0 123.1 L175.5 114.5 L176.0 106.1 L176.5 98.0 L177.0 90.6 L177.5 84.0 L178.0 78.5 L178.5 74.2 L179.0 71.2 L179.5 69.8 L180.0 69.8 L180.5 71.3 L181.0 74.3 L181.5 78.6 L182.0 84.1 L182.5 90.7 L183.0 98.2 L183.5 106.3 L184.0 114.7 L184.5 123.3 L185.0 131.7 L185.5 139.8 L186.0 147.2 L186.5 153.7 L187.0 159.1 L187.5 163.4 L188.0 166.2 L188.5 167.6 L189.0 167.6 L189.5 166.0 L190.0 163.0 L190.5 158.7 L191.0 153.1 L191.5 146.5 L192.0 139.1 L192.5 131.0 L193.0 122.6 L193.5 114.1 L194.0 105.7 L194.5 97.7 L195.0 90.4 L195.5 84.0 L196.0 78.6 L196.5 74.5 L197.0 71.7 L197.5 70.4 L198.0 70.6 L198.5 72.2 L199.0 75.2 L199.5 79.6 L200.0 85.1 L200.5 91.8 L201.0 99.2 L201.5 107.3 L202.0 115.7 L202.5 124.2 L203.0 132.6 L203.5 140.6 L204.0 147.9 L204.5 154.3 L205.0 159.6 L205.5 163.7 L206.0 166.4 L206.5 167.7 L207.0 167.5 L207.5 165.8 L208.0 162.6 L208.5 158.1 L209.0 152.4 L209.5 145.7 L210.0 138.1 L210.5 130.0 L211.0 121.4 L211.5 112.8 L212.0 104.4 L212.5 96.3 L213.0 89.0 L213.5 82.5 L214.0 77.2 L214.5 73.1 L215.0 70.3 L215.5 69.1 L216.0 69.4 L216.5 71.2 L217.0 74.4 L217.5 79.0 L218.0 84.8 L218.5 91.6 L219.0 99.3 L219.5 107.5 L220.0 116.1 L220.5 124.8 L221.0 133.3 L221.5 141.3 L222.0 148.6 L222.5 155.0 L223.0 160.3 L223.5 164.4 L224.0 167.0 L224.5 168.1 L225.0 167.8 L225.5 165.9 L226.0 162.6 L226.5 158.0 L227.0 152.2 L227.5 145.3 L228.0 137.6 L228.5 129.3 L229.0 120.7 L229.5 112.0 L230.0 103.5 L230.5 95.4 L231.0 88.1 L231.5 81.7 L232.0 76.4 L232.5 72.4 L233.0 69.8 L233.5 68.7 L234.0 69.2 L234.5 71.1 L235.0 74.4 L235.5 79.1 L236.0 85.1 L236.5 92.1 L237.0 99.9 L237.5 108.4 L238.0 117.1 L238.5 126.0 L239.0 134.6 L239.5 142.8 L240.0 150.3 L240.5 156.8 L241.0 162.2 L241.5 166.3 L242.0 168.9 L242.5 169.9 L243.0 169.4 L243.5 167.3 L244.0 163.7 L244.5 158.8 L245.0 152.5 L245.5 145.2 L246.0 137.1 L246.5 128.3 L247.0 119.2 L247.5 110.1 L248.0 101.2 L248.5 92.8 L249.0 85.1 L249.5 78.4 L250.0 72.9 L250.5 68.8 L251.0 66.2 L251.5 65.1 L252.0 65.7 L252.5 67.9 L253.0 71.7 L253.5 76.9 L254.0 83.3 L254.5 90.8 L255.0 99.1 L255.5 108.0 L256.0 117.2 L256.5 126.4 L257.0 135.3 L257.5 143.7 L258.0 151.4 L258.5 158.0 L259.0 163.4 L259.5 167.4 L260.0 169.9 L260.5 170.8 L261.0 170.1 L261.5 167.8 L262.0 164.0 L262.5 158.8 L263.0 152.3 L263.5 144.8 L264.0 136.5 L264.5 127.6 L265.0 118.4 L265.5 109.2 L266.0 100.3 L266.5 92.0 L267.0 84.4 L267.5 77.9 L268.0 72.6 L268.5 68.7 L269.0 66.3 L269.5 65.5 L270.0 66.3 L270.5 68.7 L271.0 72.7 L271.5 78.0 L272.0 84.6 L272.5 92.2 L273.0 100.6 L273.5 109.6 L274.0 118.8 L274.5 128.1 L275.0 137.0 L275.5 145.4 L276.0 152.9 L276.5 159.4 L277.0 164.7 L277.5 168.6 L278.0 170.9 L278.5 171.7 L279.0 170.8 L279.5 168.3 L280.0 164.4 L280.5 159.0 L281.0 152.4 L281.5 144.8 L282.0 136.4 L282.5 127.5 L283.0 118.4 L283.5 109.2 L284.0 100.4 L284.5 92.1 L285.0 84.7 L285.5 78.3 L286.0 73.2 L286.5 69.5 L287.0 67.3 L287.5 66.7 L288.0 67.7 L288.5 70.2 L289.0 74.2 L289.5 79.6 L290.0 86.2 L290.5 93.8 L291.0 102.2 L291.5 111.2 L292.0 120.3 L292.5 129.5 L293.0 138.3 L293.5 146.5 L294.0 154.0 L294.5 160.3 L295.0 165.4 L295.5 169.1 L296.0 171.3 L296.5 171.8 L297.0 170.8 L297.5 168.2 L298.0 164.0 L298.5 158.5 L299.0 151.8 L299.5 144.1 L300.0 135.6 L300.5 126.6 L301.0 117.4 L301.5 108.2 L302.0 99.4 L302.5 91.1 L303.0 83.7 L303.5 77.3 L304.0 72.3 L304.5 68.6 L305.0 66.5 L305.5 66.0 L306.0 67.1 L306.5 69.9 L307.0 74.1 L307.5 79.6 L308.0 86.4 L308.5 94.2 L309.0 102.7 L309.5 111.8 L310.0 121.0 L310.5 130.2 L311.0 139.1 L311.5 147.3 L312.0 154.7 L312.5 161.0 L313.0 166.0 L313.5 169.5 L314.0 171.5 L314.5 171.9 L315.0 170.7 L315.5 167.9 L316.0 163.7 L316.5 158.0 L317.0 151.2 L317.5 143.3 L318.0 134.7 L318.5 125.7 L319.0 116.4 L319.5 107.2 L320.0 98.3 L320.5 90.1 L321.0 82.7 L321.5 76.5 L322.0 71.6 L322.5 68.0 L323.0 66.1 L323.5 65.8 L324.0 67.1 L324.5 69.9 L325.0 74.3 L325.5 80.1 L326.0 87.0 L326.5 94.9 L327.0 103.6 L327.5 112.7 L328.0 122.0 L328.5 131.2 L329.0 140.1 L329.5 148.3 L330.0 155.6 L330.5 161.9 L331.0 166.8 L331.5 170.2 L332.0 172.1 L332.5 172.3 L333.0 171.0 L333.5 168.0 L334.0 163.5 L334.5 157.7 L335.0 150.7 L335.5 142.7 L336.0 134.0 L336.5 124.9 L337.0 115.5 L337.5 106.2 L338.0 97.4 L338.5 89.2 L339.0 81.9 L339.5 75.7 L340.0 70.9 L340.5 67.5 L341.0 65.7 L341.5 65.5 L342.0 66.9 L342.5 70.0 L343.0 74.5 L343.5 80.4 L344.0 87.5 L344.5 95.5 L345.0 104.3 L345.5 113.5 L346.0 122.9 L346.5 132.2 L347.0 141.1 L347.5 149.3 L348.0 156.6 L348.5 162.8 L349.0 167.6 L349.5 170.9 L350.0 172.6 L350.5 172.7 L351.0 171.2 L351.5 168.0 L352.0 163.4 L352.5 157.3 L353.0 150.1 L353.5 142.0 L354.0 133.1 L354.5 123.8 L355.0 114.3 L355.5 104.9 L356.0 96.0 L356.5 87.8 L357.0 80.4 L357.5 74.3 L358.0 69.5 L358.5 66.2 L359.0 64.5 L359.5 64.5 L360.0 66.2 L360.5 69.5 L361.0 74.2 L361.5 80.4 L362.0 87.8 L362.5 96.1 L363.0 105.1 L363.5 114.6 L364.0 124.2 L364.5 133.7 L365.0 142.7 L365.5 151.1 L366.0 158.4 L366.5 164.6 L367.0 169.4 L367.5 172.7 L368.0 174.3 L368.5 174.3 L369.0 172.6 L369.5 169.3 L370.0 164.4 L370.5 158.2 L371.0 150.8 L371.5 142.4 L372.0 133.3 L372.5 123.8 L373.0 114.1 L373.5 104.6 L374.0 95.6 L374.5 87.3 L375.0 80.0 L375.5 73.8 L376.0 69.1 L376.5 66.0 L377.0 64.4 L377.5 64.5 L378.0 66.2 L378.5 69.6 L379.0 74.5 L379.5 80.8 L380.0 88.4 L380.5 96.9 L381.0 106.2 L381.5 115.9 L382.0 125.7 L382.5 135.4 L383.0 144.7 L383.5 153.1 L384.0 160.6 L384.5 166.9 L385.0 171.7 L385.5 174.9 L386.0 176.4 L386.5 176.2 L387.0 174.2 L387.5 170.5 L388.0 165.3 L388.5 158.6 L389.0 150.6 L389.5 141.7 L390.0 132.1 L390.5 122.0 L391.0 111.8 L391.5 101.7 L392.0 92.2 L392.5 83.4 L393.0 75.7 L393.5 69.3 L394.0 64.3 L394.5 61.0 L395.0 59.6 L395.5 59.9 L396.0 62.0 L396.5 65.9 L397.0 71.3 L397.5 78.2 L398.0 86.3 L398.5 95.4 L399.0 105.2 L399.5 115.4 L400.0 125.7 L400.5 135.8 L401.0 145.4 L401.5 154.1 L402.0 161.7 L402.5 168.1 L403.0 172.9 L403.5 176.0 L404.0 177.4 L404.5 177.0 L405.0 174.7 L405.5 170.7 L406.0 165.1 L406.5 158.1 L407.0 149.8 L407.5 140.6 L408.0 130.7 L408.5 120.4 L409.0 110.0 L409.5 99.9 L410.0 90.3 L410.5 81.6 L411.0 74.0 L411.5 67.8 L412.0 63.0 L412.5 60.1 L413.0 58.8 L413.5 59.4 L414.0 61.8 L414.5 65.9 L415.0 71.6 L415.5 78.6 L416.0 86.9 L416.5 96.1 L417.0 105.9 L417.5 116.1 L418.0 126.3 L418.5 136.2 L419.0 145.6 L419.5 154.1 L420.0 161.5 L420.5 167.6 L421.0 172.1 L421.5 174.9 L422.0 176.1 L422.5 175.4 L423.0 173.0 L423.5 168.8 L424.0 163.0 L424.5 156.0 L425.0 147.7 L425.5 138.6 L426.0 128.9 L426.5 118.8 L427.0 108.8 L427.5 99.1 L428.0 89.9 L428.5 81.7 L429.0 74.5 L429.5 68.7 L430.0 64.4 L430.5 61.8 L431.0 61.0 L431.5 61.8 L432.0 64.4 L432.5 68.5 L433.0 74.1 L433.5 81.0 L434.0 88.9 L434.5 97.7 L435.0 107.0 L435.5 116.6 L436.0 126.2 L436.5 135.4 L437.0 144.0 L437.5 151.7 L438.0 158.4 L438.5 163.8 L439.0 167.7 L439.5 170.1 L440.0 170.8 L440.5 169.9 L441.0 167.4 L441.5 163.6 L442.0 158.3 L442.5 151.8 L443.0 144.3 L443.5 136.1 L444.0 127.3 L444.5 118.2 L445.0 109.2 L445.5 100.4 L446.0 92.3 L446.5 85.0 L447.0 78.7 L447.5 73.6 L448.0 69.9 L448.5 67.6 L449.0 66.9 L449.5 67.7 L450.0 70.1 L450.5 73.9 L451.0 79.1 L451.5 85.5 L452.0 92.9 L452.5 101.1 L453.0 109.8 L453.5 118.8 L454.0 127.7 L454.5 136.4 L455.0 144.5 L455.5 151.8 L456.0 158.1 L456.5 163.1 L457.0 166.8 L457.5 169.1 L458.0 169.7 L458.5 168.9 L459.0 166.5 L459.5 162.6 L460.0 157.4 L460.5 151.0 L461.0 143.6 L461.5 135.5 L462.0 126.9 L462.5 118.0 L463.0 109.2 L463.5 100.6 L464.0 92.6 L464.5 85.5 L465.0 79.3 L465.5 74.4 L466.0 70.8 L466.5 68.6 L467.0 68.0 L467.5 68.9 L468.0 71.4 L468.5 75.3 L469.0 80.5 L469.5 86.9 L470.0 94.2 L470.5 102.3 L471.0 110.9 L471.5 119.7 L472.0 128.5 L472.5 136.9 L473.0 144.8 L473.5 151.9 L474.0 158.0 L474.5 162.9 L475.0 166.4 L475.5 168.4 L476.0 169.0 L476.5 168.0 L477.0 165.4 L477.5 161.5 L478.0 156.2 L478.5 149.8 L479.0 142.4 L479.5 134.3 L480.0 125.7 L480.5 116.9 L481.0 108.2 L481.5 99.7 L482.0 91.8 L482.5 84.8 L483.0 78.8 L483.5 73.9 L484.0 70.5 L484.5 68.5 L485.0 68.1 L485.5 69.2 L486.0 71.8 L486.5 75.8 L487.0 81.1 L487.5 87.6 L488.0 95.0 L488.5 103.1 L489.0 111.7 L489.5 120.5 L490.0 129.2 L490.5 137.6 L491.0 145.4 L491.5 152.4 L492.0 158.4 L492.5 163.1 L493.0 166.4 L493.5 168.3 L494.0 168.7 L494.5 167.6 L495.0 164.9 L495.5 160.8 L496.0 155.5 L496.5 149.0 L497.0 141.6 L497.5 133.5 L498.0 125.0 L498.5 116.2 L499.0 107.6 L499.5 99.2 L500.0 91.5 L500.5 84.6 L501.0 78.8 L501.5 74.2 L502.0 70.9 L502.5 69.1 L503.0 68.8 L503.5 70.0 L504.0 72.7 L504.5 76.8 L505.0 82.2 L505.5 88.7 L506.0 96.1 L506.5 104.2 L507.0 112.8 L507.5 121.5 L508.0 130.1 L508.5 138.4 L509.0 146.1 L509.5 152.9 L510.0 158.7 L510.5 163.3 L511.0 166.5 L511.5 168.2 L512.0 168.4 L512.5 167.1 L513.0 164.4 L513.5 160.2 L514.0 154.7 L514.5 148.2 L515.0 140.7 L515.5 132.6 L516.0 124.0 L516.5 115.3 L517.0 106.7 L517.5 98.5 L518.0 90.8 L518.5 84.0 L519.0 78.3 L519.5 73.8 L520.0 70.6 L520.5 69.0 L521.0 68.9 L521.5 70.3 L522.0 73.2 L522.5 77.4 L523.0 82.9 L523.5 89.5 L524.0 97.0 L524.5 105.2 L525.0 113.8 L525.5 122.5 L526.0 131.1 L526.5 139.3 L527.0 146.8 L527.5 153.6 L528.0 159.2 L528.5 163.6 L529.0 166.7 L529.5 168.3 L530.0 168.3 L530.5 166.9 L531.0 164.0 L531.5 159.7 L532.0 154.2 L532.5 147.6 L533.0 140.2 L533.5 132.1 L534.0 123.6 L534.5 114.9 L535.0 106.4 L535.5 98.3 L536.0 90.9 L536.5 84.3 L537.0 78.7 L537.5 74.4 L538.0 71.5 L538.5 70.0 L539.0 70.0 L539.5 71.5 L540.0 74.4 L540.5 78.8 L541.0 84.3 L541.5 91.0 L542.0 98.4 L542.5 106.6 L543.0 115.1 L543.5 123.7 L544.0 132.2 L544.5 140.3 L545.0 147.7 L545.5 154.3 L546.0 159.8 L546.5 164.0 L547.0 166.9 L547.5 168.3 L548.0 168.3 L548.5 166.7 L549.0 163.7 L549.5 159.3 L550.0 153.7 L550.5 147.0 L551.0 139.5 L551.5 131.3 L552.0 122.8 L552.5 114.2 L553.0 105.7 L553.5 97.7 L554.0 90.2 L554.5 83.7 L555.0 78.3 L555.5 74.1 L556.0 71.3 L556.5 69.9 L557.0 70.1 L557.5 71.7 L558.0 74.8 L558.5 79.3 L559.0 84.9 L559.5 91.7 L560.0 99.2 L560.5 107.4 L561.0 115.9 L561.5 124.5 L562.0 133.0 L562.5 141.0 L563.0 148.4 L563.5 154.9 L564.0 160.3 L564.5 164.4 L565.0 167.1 L565.5 168.4 L566.0 168.2 L566.5 166.5 L567.0 163.3 L567.5 158.8 L568.0 153.0 L568.5 146.3 L569.0 138.7 L569.5 130.5 L570.0 122.0 L570.5 113.3 L571.0 104.9 L571.5 96.9 L572.0 89.6 L572.5 83.1 L573.0 77.8" fill="none" stroke="#9a9a9a" stroke-width="3.2" stroke-linejoin="round" opacity=".35"/><path d="M0.0 66.7 L0.5 66.7 L1.0 68.3 L1.5 71.4 L2.0 76.0 L2.5 81.9 L3.0 89.0 L3.5 97.0 L4.0 105.6 L4.5 114.7 L5.0 123.9 L5.5 132.9 L6.0 141.5 L6.5 149.5 L7.0 156.5 L7.5 162.4 L8.0 166.9 L8.5 170.0 L9.0 171.5 L9.5 171.5 L10.0 169.8 L10.5 166.5 L11.0 161.8 L11.5 155.8 L12.0 148.7 L12.5 140.7 L13.0 131.9 L13.5 122.8 L14.0 113.6 L14.5 104.5 L15.0 95.9 L15.5 88.0 L16.0 81.0 L16.5 75.1 L17.0 70.6 L17.5 67.6 L18.0 66.1 L18.5 66.3 L19.0 68.0 L19.5 71.3 L20.0 76.1 L20.5 82.2 L21.0 89.4 L21.5 97.4 L22.0 106.2 L22.5 115.3 L23.0 124.6 L23.5 133.6 L24.0 142.2 L24.5 150.1 L25.0 157.1 L25.5 162.9 L26.0 167.3 L26.5 170.2 L27.0 171.6 L27.5 171.5 L28.0 169.7 L28.5 166.4 L29.0 161.6 L29.5 155.5 L30.0 148.3 L30.5 140.2 L31.0 131.3 L31.5 122.2 L32.0 112.8 L32.5 103.7 L33.0 95.0 L33.5 87.1 L34.0 80.1 L34.5 74.3 L35.0 69.8 L35.5 66.9 L36.0 65.6 L36.5 65.7 L37.0 67.6 L37.5 71.0 L38.0 75.9 L38.5 82.2 L39.0 89.6 L39.5 98.0 L40.0 107.1 L40.5 116.6 L41.0 126.2 L41.5 135.6 L42.0 144.6 L42.5 152.9 L43.0 160.2 L43.5 166.2 L44.0 170.8 L44.5 173.9 L45.0 175.2 L45.5 174.9 L46.0 172.8 L46.5 169.1 L47.0 163.8 L47.5 157.1 L48.0 149.2 L48.5 140.4 L49.0 130.8 L49.5 120.8 L50.0 110.7 L50.5 100.9 L51.0 91.5 L51.5 82.9 L52.0 75.3 L52.5 69.1 L53.0 64.3 L53.5 61.1 L54.0 59.7 L54.5 60.3 L55.0 62.6 L55.5 66.6 L56.0 72.2 L56.5 79.2 L57.0 87.5 L57.5 96.7 L58.0 106.5 L58.5 116.8 L59.0 127.1 L59.5 137.1 L60.0 146.6 L60.5 155.3 L61.0 162.8 L61.5 169.0 L62.0 173.7 L62.5 176.7 L63.0 178.0 L63.5 177.3 L64.0 174.9 L64.5 170.7 L65.0 165.0 L65.5 157.9 L66.0 149.5 L66.5 140.3 L67.0 130.4 L67.5 120.1 L68.0 109.8 L68.5 99.8 L69.0 90.4 L69.5 81.9 L70.0 74.5 L70.5 68.4 L71.0 63.9 L71.5 61.1 L72.0 60.0 L72.5 60.8 L73.0 63.4 L73.5 67.6 L74.0 73.4 L74.5 80.6 L75.0 88.9 L75.5 98.2 L76.0 108.0 L76.5 118.2 L77.0 128.4 L77.5 138.3 L78.0 147.5 L78.5 155.9 L79.0 163.1 L79.5 169.0 L80.0 173.4 L80.5 176.1 L81.0 177.0 L81.5 176.0 L82.0 173.3 L82.5 168.9 L83.0 163.0 L83.5 155.8 L84.0 147.5 L84.5 138.4 L85.0 128.7 L85.5 118.8 L86.0 108.9 L86.5 99.4 L87.0 90.5 L87.5 82.5 L88.0 75.6 L88.5 70.1 L89.0 66.0 L89.5 63.6 L90.0 62.8 L90.5 63.8 L91.0 66.4 L91.5 70.6 L92.0 76.2 L92.5 83.0 L93.0 90.8 L93.5 99.4 L94.0 108.5 L94.5 117.9 L95.0 127.1 L95.5 136.0 L96.0 144.3 L96.5 151.7 L97.0 158.0 L97.5 163.0 L98.0 166.6 L98.5 168.7 L99.0 169.2 L99.5 168.1 L100.0 165.7 L100.5 161.8 L101.0 156.6 L101.5 150.2 L102.0 142.8 L102.5 134.7 L103.0 126.0 L103.5 117.2 L104.0 108.4 L104.5 99.9 L105.0 92.0 L105.5 84.9 L106.0 78.8 L106.5 74.0 L107.0 70.5 L107.5 68.5 L108.0 68.0 L108.5 69.0 L109.0 71.4 L109.5 75.3 L110.0 80.5 L110.5 86.9 L111.0 94.2 L111.5 102.3 L112.0 110.9 L112.5 119.7 L113.0 128.5 L113.5 136.9 L114.0 144.8 L114.5 151.9 L115.0 158.0 L115.5 162.9 L116.0 166.4 L116.5 168.4 L117.0 169.0 L117.5 168.0 L118.0 165.5 L118.5 161.5 L119.0 156.3 L119.5 149.9 L120.0 142.6 L120.5 134.5 L121.0 126.0 L121.5 117.2 L122.0 108.5 L122.5 100.1 L123.0 92.3 L123.5 85.3 L124.0 79.3 L124.5 74.5 L125.0 71.1 L125.5 69.2 L126.0 68.7 L126.5 69.8 L127.0 72.3 L127.5 76.3 L128.0 81.6 L128.5 88.0 L129.0 95.4 L129.5 103.4 L130.0 112.0 L130.5 120.7 L131.0 129.4 L131.5 137.8 L132.0 145.6 L132.5 152.6 L133.0 158.6 L133.5 163.3 L134.0 166.7 L134.5 168.6 L135.0 169.0 L135.5 167.8 L136.0 165.1 L136.5 161.0 L137.0 155.6 L137.5 149.1 L138.0 141.7 L138.5 133.5 L139.0 124.9 L139.5 116.1 L140.0 107.4 L140.5 99.0 L141.0 91.2 L141.5 84.2 L142.0 78.3 L142.5 73.6 L143.0 70.3 L143.5 68.4 L144.0 68.1 L144.5 69.3 L145.0 72.1 L145.5 76.2 L146.0 81.7 L146.5 88.3 L147.0 95.7 L147.5 103.9 L148.0 112.5 L148.5 121.3 L149.0 130.0 L149.5 138.3 L150.0 146.0 L150.5 152.9 L151.0 158.7 L151.5 163.3 L152.0 166.5 L152.5 168.2 L153.0 168.4 L153.5 167.1 L154.0 164.3 L154.5 160.1 L155.0 154.6 L155.5 148.1 L156.0 140.6 L156.5 132.5 L157.0 124.0 L157.5 115.3 L158.0 106.7 L158.5 98.5 L159.0 90.9 L159.5 84.1 L160.0 78.4 L160.5 74.0 L161.0 70.9 L161.5 69.2 L162.0 69.1 L162.5 70.5 L163.0 73.3 L163.5 77.6 L164.0 83.0 L164.5 89.6 L165.0 97.0 L165.5 105.1 L166.0 113.6 L166.5 122.2 L167.0 130.8 L167.5 138.9 L168.0 146.4 L168.5 153.1 L169.0 158.7 L169.5 163.0 L170.0 166.0 L170.5 167.6 L171.0 167.6 L171.5 166.2 L172.0 163.3 L172.5 159.1 L173.0 153.6 L173.5 147.1 L174.0 139.6 L174.5 131.6 L175.0 123.1 L175.5 114.5 L176.0 106.1 L176.5 98.0 L177.0 90.6 L177.5 84.0 L178.0 78.5 L178.5 74.2 L179.0 71.2 L179.5 69.8 L180.0 69.8 L180.5 71.3 L181.0 74.3 L181.5 78.6 L182.0 84.1 L182.5 90.7 L183.0 98.2 L183.5 106.3 L184.0 114.7 L184.5 123.3 L185.0 131.7 L185.5 139.8 L186.0 147.2 L186.5 153.7 L187.0 159.1 L187.5 163.4 L188.0 166.2 L188.5 167.6 L189.0 167.6 L189.5 166.0 L190.0 163.0 L190.5 158.7 L191.0 153.1 L191.5 146.5 L192.0 139.1 L192.5 131.0 L193.0 122.6 L193.5 114.1 L194.0 105.7 L194.5 97.7 L195.0 90.4 L195.5 84.0 L196.0 78.6 L196.5 74.5 L197.0 71.7 L197.5 70.4 L198.0 70.6 L198.5 72.2 L199.0 75.2 L199.5 79.6 L200.0 85.1 L200.5 91.8 L201.0 99.2 L201.5 107.3 L202.0 115.7 L202.5 124.2 L203.0 132.6 L203.5 140.6 L204.0 147.9 L204.5 154.3 L205.0 159.6 L205.5 163.7 L206.0 166.4 L206.5 167.7 L207.0 167.5 L207.5 165.8 L208.0 162.6 L208.5 158.1 L209.0 152.4 L209.5 145.7 L210.0 138.1 L210.5 130.0 L211.0 121.4 L211.5 112.8 L212.0 104.4 L212.5 96.3 L213.0 89.0 L213.5 82.5 L214.0 77.2 L214.5 73.1 L215.0 70.3 L215.5 69.1 L216.0 69.4 L216.5 71.2 L217.0 74.4 L217.5 79.0 L218.0 84.8 L218.5 91.6 L219.0 99.3 L219.5 107.5 L220.0 116.1 L220.5 124.8 L221.0 133.3 L221.5 141.3 L222.0 148.6 L222.5 155.0 L223.0 160.3 L223.5 164.4 L224.0 167.0 L224.5 168.1 L225.0 167.8 L225.5 165.9 L226.0 162.6 L226.5 158.0 L227.0 152.2 L227.5 145.3 L228.0 137.6 L228.5 129.3 L229.0 120.7 L229.5 112.0 L230.0 103.5 L230.5 95.4 L231.0 88.1 L231.5 81.7 L232.0 76.4 L232.5 72.4 L233.0 69.8 L233.5 68.7 L234.0 69.2 L234.5 71.1 L235.0 74.4 L235.5 79.1 L236.0 85.1 L236.5 92.1 L237.0 99.9 L237.5 108.4 L238.0 117.1 L238.5 126.0 L239.0 134.6 L239.5 142.8 L240.0 150.3 L240.5 156.8 L241.0 162.2 L241.5 166.3 L242.0 168.9 L242.5 169.9 L243.0 169.4 L243.5 167.3 L244.0 163.7 L244.5 158.8 L245.0 152.5 L245.5 145.2 L246.0 137.1 L246.5 128.3 L247.0 119.2 L247.5 110.1 L248.0 101.2 L248.5 92.8 L249.0 85.1 L249.5 78.4 L250.0 72.9 L250.5 68.8 L251.0 66.2 L251.5 65.1 L252.0 65.7 L252.5 67.9 L253.0 71.7 L253.5 76.9 L254.0 83.3 L254.5 90.8 L255.0 99.1 L255.5 108.0 L256.0 117.2 L256.5 126.4 L257.0 135.3 L257.5 143.7 L258.0 151.4 L258.5 158.0 L259.0 163.4 L259.5 167.4 L260.0 169.9 L260.5 170.8 L261.0 170.1 L261.5 167.8 L262.0 164.0 L262.5 158.8 L263.0 152.3 L263.5 144.8 L264.0 136.5 L264.5 127.6 L265.0 118.4 L265.5 109.2 L266.0 100.3 L266.5 92.0 L267.0 84.4 L267.5 77.9 L268.0 72.6 L268.5 68.7 L269.0 66.3 L269.5 65.5 L270.0 66.3 L270.5 68.7 L271.0 72.7 L271.5 78.0 L272.0 84.6 L272.5 92.2 L273.0 100.6 L273.5 109.6 L274.0 118.8 L274.5 128.1 L275.0 137.0 L275.5 145.4 L276.0 152.9 L276.5 159.4 L277.0 164.7 L277.5 168.6 L278.0 170.9 L278.5 171.7 L279.0 170.8 L279.5 168.3 L280.0 164.4 L280.5 159.0 L281.0 152.4 L281.5 144.8 L282.0 136.4 L282.5 127.5 L283.0 118.4 L283.5 109.2 L284.0 100.4 L284.5 92.1 L285.0 84.7 L285.5 78.3 L286.0 73.2 L286.5 69.5 L287.0 67.3 L287.5 66.7 L288.0 67.7 L288.5 70.2 L289.0 74.2 L289.5 79.6 L290.0 86.2 L290.5 93.8 L291.0 102.2 L291.5 111.2 L292.0 120.3 L292.5 129.5 L293.0 138.3 L293.5 146.5 L294.0 154.0 L294.5 160.3 L295.0 165.4 L295.5 169.1 L296.0 171.3 L296.5 171.8 L297.0 170.8 L297.5 168.2 L298.0 164.0 L298.5 158.5 L299.0 151.8 L299.5 144.1 L300.0 135.6 L300.5 126.6 L301.0 117.4 L301.5 108.2 L302.0 99.4 L302.5 91.1 L303.0 83.7 L303.5 77.3 L304.0 72.3 L304.5 68.6 L305.0 66.5 L305.5 66.0 L306.0 67.1 L306.5 69.9 L307.0 74.1 L307.5 79.6 L308.0 86.4 L308.5 94.2 L309.0 102.7 L309.5 111.8 L310.0 121.0 L310.5 130.2 L311.0 139.1 L311.5 147.3 L312.0 154.7 L312.5 161.0 L313.0 166.0 L313.5 169.5 L314.0 171.5 L314.5 171.9 L315.0 170.7 L315.5 167.9 L316.0 163.7 L316.5 158.0 L317.0 151.2 L317.5 143.3 L318.0 134.7 L318.5 125.7 L319.0 116.4 L319.5 107.2 L320.0 98.3 L320.5 90.1 L321.0 82.7 L321.5 76.5 L322.0 71.6 L322.5 68.0 L323.0 66.1 L323.5 65.8 L324.0 67.1 L324.5 69.9 L325.0 74.3 L325.5 80.1 L326.0 87.0 L326.5 94.9 L327.0 103.6 L327.5 112.7 L328.0 122.0 L328.5 131.2 L329.0 140.1 L329.5 148.3 L330.0 155.6 L330.5 161.9 L331.0 166.8 L331.5 170.2 L332.0 172.1 L332.5 172.3 L333.0 171.0 L333.5 168.0 L334.0 163.5 L334.5 157.7 L335.0 150.7 L335.5 142.7 L336.0 134.0 L336.5 124.9 L337.0 115.5 L337.5 106.2 L338.0 97.4 L338.5 89.2 L339.0 81.9 L339.5 75.7 L340.0 70.9 L340.5 67.5 L341.0 65.7 L341.5 65.5 L342.0 66.9 L342.5 70.0 L343.0 74.5 L343.5 80.4 L344.0 87.5 L344.5 95.5 L345.0 104.3 L345.5 113.5 L346.0 122.9 L346.5 132.2 L347.0 141.1 L347.5 149.3 L348.0 156.6 L348.5 162.8 L349.0 167.6 L349.5 170.9 L350.0 172.6 L350.5 172.7 L351.0 171.2 L351.5 168.0 L352.0 163.4 L352.5 157.3 L353.0 150.1 L353.5 142.0 L354.0 133.1 L354.5 123.8 L355.0 114.3 L355.5 104.9 L356.0 96.0 L356.5 87.8 L357.0 80.4 L357.5 74.3 L358.0 69.5 L358.5 66.2 L359.0 64.5 L359.5 64.5 L360.0 66.2 L360.5 69.5 L361.0 74.2 L361.5 80.4 L362.0 87.8 L362.5 96.1 L363.0 105.1 L363.5 114.6 L364.0 124.2 L364.5 133.7 L365.0 142.7 L365.5 151.1 L366.0 158.4 L366.5 164.6 L367.0 169.4 L367.5 172.7 L368.0 174.3 L368.5 174.3 L369.0 172.6 L369.5 169.3 L370.0 164.4 L370.5 158.2 L371.0 150.8 L371.5 142.4 L372.0 133.3 L372.5 123.8 L373.0 114.1 L373.5 104.6 L374.0 95.6 L374.5 87.3 L375.0 80.0 L375.5 73.8 L376.0 69.1 L376.5 66.0 L377.0 64.4 L377.5 64.5 L378.0 66.2 L378.5 69.6 L379.0 74.5 L379.5 80.8 L380.0 88.4 L380.5 96.9 L381.0 106.2 L381.5 115.9 L382.0 125.7 L382.5 135.4 L383.0 144.7 L383.5 153.1 L384.0 160.6 L384.5 166.9 L385.0 171.7 L385.5 174.9 L386.0 176.4 L386.5 176.2 L387.0 174.2 L387.5 170.5 L388.0 165.3 L388.5 158.6 L389.0 150.6 L389.5 141.7 L390.0 132.1 L390.5 122.0 L391.0 111.8 L391.5 101.7 L392.0 92.2 L392.5 83.4 L393.0 75.7 L393.5 69.3 L394.0 64.3 L394.5 61.0 L395.0 59.6 L395.5 59.9 L396.0 62.0 L396.5 65.9 L397.0 71.3 L397.5 78.2 L398.0 86.3 L398.5 95.4 L399.0 105.2 L399.5 115.4 L400.0 125.7 L400.5 135.8 L401.0 145.4 L401.5 154.1 L402.0 161.7 L402.5 168.1 L403.0 172.9 L403.5 176.0 L404.0 177.4 L404.5 177.0 L405.0 174.7 L405.5 170.7 L406.0 165.1 L406.5 158.1 L407.0 149.8 L407.5 140.6 L408.0 130.7 L408.5 120.4 L409.0 110.0 L409.5 99.9 L410.0 90.3 L410.5 81.6 L411.0 74.0 L411.5 67.8 L412.0 63.0 L412.5 60.1 L413.0 58.8 L413.5 59.4 L414.0 61.8 L414.5 65.9 L415.0 71.6 L415.5 78.6 L416.0 86.9 L416.5 96.1 L417.0 105.9 L417.5 116.1 L418.0 126.3 L418.5 136.2 L419.0 145.6 L419.5 154.1 L420.0 161.5 L420.5 167.6 L421.0 172.1 L421.5 174.9 L422.0 176.1 L422.5 175.4 L423.0 173.0 L423.5 168.8 L424.0 163.0 L424.5 156.0 L425.0 147.7 L425.5 138.6 L426.0 128.9 L426.5 118.8 L427.0 108.8 L427.5 99.1 L428.0 89.9 L428.5 81.7 L429.0 74.5 L429.5 68.7 L430.0 64.4 L430.5 61.8 L431.0 61.0 L431.5 61.8 L432.0 64.4 L432.5 68.5 L433.0 74.1 L433.5 81.0 L434.0 88.9 L434.5 97.7 L435.0 107.0 L435.5 116.6 L436.0 126.2 L436.5 135.4 L437.0 144.0 L437.5 151.7 L438.0 158.4 L438.5 163.8 L439.0 167.7 L439.5 170.1 L440.0 170.8 L440.5 169.9 L441.0 167.4 L441.5 163.6 L442.0 158.3 L442.5 151.8 L443.0 144.3 L443.5 136.1 L444.0 127.3 L444.5 118.2 L445.0 109.2 L445.5 100.4 L446.0 92.3 L446.5 85.0 L447.0 78.7 L447.5 73.6 L448.0 69.9 L448.5 67.6 L449.0 66.9 L449.5 67.7 L450.0 70.1 L450.5 73.9 L451.0 79.1 L451.5 85.5 L452.0 92.9 L452.5 101.1 L453.0 109.8 L453.5 118.8 L454.0 127.7 L454.5 136.4 L455.0 144.5 L455.5 151.8 L456.0 158.1 L456.5 163.1 L457.0 166.8 L457.5 169.1 L458.0 169.7 L458.5 168.9 L459.0 166.5 L459.5 162.6 L460.0 157.4 L460.5 151.0 L461.0 143.6 L461.5 135.5 L462.0 126.9 L462.5 118.0 L463.0 109.2 L463.5 100.6 L464.0 92.6 L464.5 85.5 L465.0 79.3 L465.5 74.4 L466.0 70.8 L466.5 68.6 L467.0 68.0 L467.5 68.9 L468.0 71.4 L468.5 75.3 L469.0 80.5 L469.5 86.9 L470.0 94.2 L470.5 102.3 L471.0 110.9 L471.5 119.7 L472.0 128.5 L472.5 136.9 L473.0 144.8 L473.5 151.9 L474.0 158.0 L474.5 162.9 L475.0 166.4 L475.5 168.4 L476.0 169.0 L476.5 168.0 L477.0 165.4 L477.5 161.5 L478.0 156.2 L478.5 149.8 L479.0 142.4 L479.5 134.3 L480.0 125.7 L480.5 116.9 L481.0 108.2 L481.5 99.7 L482.0 91.8 L482.5 84.8 L483.0 78.8 L483.5 73.9 L484.0 70.5 L484.5 68.5 L485.0 68.1 L485.5 69.2 L486.0 71.8 L486.5 75.8 L487.0 81.1 L487.5 87.6 L488.0 95.0 L488.5 103.1 L489.0 111.7 L489.5 120.5 L490.0 129.2 L490.5 137.6 L491.0 145.4 L491.5 152.4 L492.0 158.4 L492.5 163.1 L493.0 166.4 L493.5 168.3 L494.0 168.7 L494.5 167.6 L495.0 164.9 L495.5 160.8 L496.0 155.5 L496.5 149.0 L497.0 141.6 L497.5 133.5 L498.0 125.0 L498.5 116.2 L499.0 107.6 L499.5 99.2 L500.0 91.5 L500.5 84.6 L501.0 78.8 L501.5 74.2 L502.0 70.9 L502.5 69.1 L503.0 68.8 L503.5 70.0 L504.0 72.7 L504.5 76.8 L505.0 82.2 L505.5 88.7 L506.0 96.1 L506.5 104.2 L507.0 112.8 L507.5 121.5 L508.0 130.1 L508.5 138.4 L509.0 146.1 L509.5 152.9 L510.0 158.7 L510.5 163.3 L511.0 166.5 L511.5 168.2 L512.0 168.4 L512.5 167.1 L513.0 164.4 L513.5 160.2 L514.0 154.7 L514.5 148.2 L515.0 140.7 L515.5 132.6 L516.0 124.0 L516.5 115.3 L517.0 106.7 L517.5 98.5 L518.0 90.8 L518.5 84.0 L519.0 78.3 L519.5 73.8 L520.0 70.6 L520.5 69.0 L521.0 68.9 L521.5 70.3 L522.0 73.2 L522.5 77.4 L523.0 82.9 L523.5 89.5 L524.0 97.0 L524.5 105.2 L525.0 113.8 L525.5 122.5 L526.0 131.1 L526.5 139.3 L527.0 146.8 L527.5 153.6 L528.0 159.2 L528.5 163.6 L529.0 166.7 L529.5 168.3 L530.0 168.3 L530.5 166.9 L531.0 164.0 L531.5 159.7 L532.0 154.2 L532.5 147.6 L533.0 140.2 L533.5 132.1 L534.0 123.6 L534.5 114.9 L535.0 106.4 L535.5 98.3 L536.0 90.9 L536.5 84.3 L537.0 78.7 L537.5 74.4 L538.0 71.5 L538.5 70.0 L539.0 70.0 L539.5 71.5 L540.0 74.4 L540.5 78.8 L541.0 84.3 L541.5 91.0 L542.0 98.4 L542.5 106.6 L543.0 115.1 L543.5 123.7 L544.0 132.2 L544.5 140.3 L545.0 147.7 L545.5 154.3 L546.0 159.8 L546.5 164.0 L547.0 166.9 L547.5 168.3 L548.0 168.3 L548.5 166.7 L549.0 163.7 L549.5 159.3 L550.0 153.7 L550.5 147.0 L551.0 139.5 L551.5 131.3 L552.0 122.8 L552.5 114.2 L553.0 105.7 L553.5 97.7 L554.0 90.2 L554.5 83.7 L555.0 78.3 L555.5 74.1 L556.0 71.3 L556.5 69.9 L557.0 70.1 L557.5 71.7 L558.0 74.8 L558.5 79.3 L559.0 84.9 L559.5 91.7 L560.0 99.2 L560.5 107.4 L561.0 115.9 L561.5 124.5 L562.0 133.0 L562.5 141.0 L563.0 148.4 L563.5 154.9 L564.0 160.3 L564.5 164.4 L565.0 167.1 L565.5 168.4 L566.0 168.2 L566.5 166.5 L567.0 163.3 L567.5 158.8 L568.0 153.0 L568.5 146.3 L569.0 138.7 L569.5 130.5 L570.0 122.0 L570.5 113.3 L571.0 104.9 L571.5 96.9 L572.0 89.6 L572.5 83.1 L573.0 77.8" fill="none" stroke="#e6e6e6" stroke-width="1.9" stroke-linejoin="round"/></svg>
<div class="lab" style="left:1554px;top:70px;line-height:14px;font-size:11.2px">Default Device</div>
<div class="lab" style="left:1153px;top:283px;line-height:14px">Frequency</div>
<div class="lab" style="left:1341px;top:283px;line-height:14px">Bandwidth</div>
<div class="lab" style="left:1507px;top:283px;line-height:14px">Center Frequency</div>
<div class="a" style="left:1085px;top:302px;width:573px;height:1px;background:#e4e4e4"></div>
<div class="a" style="left:1085px;top:303px;width:573px;height:35px;background:#0f0f0f"></div>
<div class="a mono" style="left:1085px;top:303px;width:25px;height:35px;text-align:center;color:#d9c21f;font-size:17px;line-height:34px">V</div>
<div class="a" style="left:1110px;top:303px;width:1px;height:35px;background:#e8e8e8"></div>
<div class="a" style="left:1111.30px;top:303px;width:182.38px;height:35px;overflow:hidden"><div class="dig dk" style="left:0.00px;width:17.08px;height:35px"></div><div class="dig dk" style="left:16.58px;width:17.08px;height:35px"></div><div class="dig lt" style="left:33.16px;width:17.08px;height:35px">2</div><div class="dig lt" style="left:49.74px;width:17.08px;height:35px">3</div><div class="dig lt" style="left:66.32px;width:17.08px;height:35px">2</div><div class="dig dk" style="left:82.90px;width:17.08px;height:35px">0</div><div class="dig dk" style="left:99.48px;width:17.08px;height:35px">0</div><div class="dig dk" style="left:116.06px;width:17.08px;height:35px">3</div><div class="dig lt" style="left:132.64px;width:17.08px;height:35px">6</div><div class="dig lt" style="left:149.22px;width:17.08px;height:35px">2</div><div class="dig lt" style="left:165.80px;width:17.08px;height:35px">3</div></div>
<div class="a" style="left:1315.70px;top:303px;width:137.90px;height:35px;overflow:hidden"><div class="dig hv" style="left:0.00px;width:20.20px;height:35px"></div><div class="dig dk" style="left:19.70px;width:20.20px;height:35px"></div><div class="dig dk" style="left:39.40px;width:20.20px;height:35px">1</div><div class="dig dk" style="left:59.10px;width:20.20px;height:35px">1</div><div class="dig lt" style="left:78.80px;width:20.20px;height:35px">7</div><div class="dig lt" style="left:98.50px;width:20.20px;height:35px">3</div><div class="dig lt" style="left:118.20px;width:20.20px;height:35px">0</div></div>
<div class="a" style="left:1475.50px;top:303px;width:182.38px;height:35px;overflow:hidden"><div class="dig dk" style="left:0.00px;width:17.08px;height:35px"></div><div class="dig dk" style="left:16.58px;width:17.08px;height:35px"></div><div class="dig lt" style="left:33.16px;width:17.08px;height:35px">2</div><div class="dig lt" style="left:49.74px;width:17.08px;height:35px">3</div><div class="dig lt" style="left:66.32px;width:17.08px;height:35px">2</div><div class="dig dk" style="left:82.90px;width:17.08px;height:35px">0</div><div class="dig dk" style="left:99.48px;width:17.08px;height:35px">0</div><div class="dig dk" style="left:116.06px;width:17.08px;height:35px">0</div><div class="dig lt" style="left:132.64px;width:17.08px;height:35px">0</div><div class="dig lt" style="left:149.22px;width:17.08px;height:35px">0</div><div class="dig lt" style="left:165.80px;width:17.08px;height:35px">0</div></div>
<div class="a" style="left:1658px;top:64px;width:1px;height:274px;background:#e8e8e8"></div>
<div class="a" style="left:1659px;top:64px;width:20px;height:274px;background:#0f0f0f"></div>
<div class="a" style="left:1659px;top:64px;width:20px;height:201px;background:linear-gradient(90deg,#202020,#363636 50%,#242424)"></div>
<div class="a" style="left:1659px;top:255px;width:20px;height:10px;background:linear-gradient(90deg,#00b82c,#04de3c 50%,#00b82c)"></div>
<div class="a" style="left:1659px;top:265px;width:20px;height:1px;background:#e8e8e8"></div>
<div class="a mono" style="left:1659px;top:266px;width:19px;height:36px;text-align:center;color:#c9b622;font-size:18px;line-height:37px">S</div>
<div class="a" style="left:1659px;top:302px;width:20px;height:1px;background:#e8e8e8"></div>
<div class="a mono" style="left:1659px;top:303px;width:19px;height:35px;text-align:center;color:#d0201c;font-size:18px;line-height:36px">M</div>
<div class="a" style="left:1px;top:338px;width:1678px;height:5px;background:#f0f0f0"></div>
<div class="a" style="left:1px;top:343px;width:269px;height:680px;background:#111"></div>
<div class="a" style="left:270px;top:343px;width:5px;height:680px;background:#f0f0f0"></div>
<div class="a" style="left:7px;top:349px;width:257px;height:29px;background:#fff;border:1px solid #7a7a7a"></div>
<div class="a ui" style="left:15px;top:353px;font-size:15.0px;letter-spacing:-0.670px;line-height:20px;color:#111;">Search..</div>
<div class="a" style="left:2px;top:384px;width:266px;height:413px;border:1px solid #828282;background:#111"></div>
<div class="a" style="left:246px;top:385px;width:21px;height:411px;background:#f0f0f0"></div>
<div class="a" style="left:248px;top:408px;width:18px;height:161px;background:#cdcdcd"></div>
<svg class="a" style="left:250px;top:391px" width="14" height="10" viewBox="0 0 14 10"><path d="M2 8 L7 3 L12 8" stroke="#505050" stroke-width="1.8" fill="none"/></svg>
<svg class="a" style="left:250px;top:780px" width="14" height="10" viewBox="0 0 14 10"><path d="M2 2 L7 7 L12 2" stroke="#505050" stroke-width="1.8" fill="none"/></svg>
<div class="a" style="left:14px;top:394px;width:11px;height:11px;background:#f4f4f4;border:1px solid #9a9a9a"></div><div class="a" style="left:17px;top:399px;width:5px;height:1px;background:#2b3a8c"></div>
<div class="a" style="left:26px;top:399px;width:5px;height:1px;background:repeating-linear-gradient(90deg,#5a5a5a 0,#5a5a5a 1px,transparent 1px,transparent 2px)"></div>
<div class="a ui" style="left:33px;top:387px;font-size:15px;letter-spacing:0.192px;line-height:20px;color:#fff;">Active</div>
<div class="a" style="left:43px;top:421px;width:11px;height:1px;background:repeating-linear-gradient(90deg,#5a5a5a 0,#5a5a5a 1px,transparent 1px,transparent 2px)"></div>
<div class="a ui" style="left:57px;top:409.5px;font-size:14.6px;letter-spacing:-0.532px;line-height:20px;color:#fff;">157.9631MHz USB</div>
<div class="a" style="left:43px;top:443px;width:11px;height:1px;background:repeating-linear-gradient(90deg,#5a5a5a 0,#5a5a5a 1px,transparent 1px,transparent 2px)"></div>
<div class="a ui" style="left:57px;top:432.0px;font-size:14.6px;letter-spacing:-0.532px;line-height:20px;color:#fff;">177.8689MHz USB</div>
<div class="a" style="left:43px;top:466px;width:11px;height:1px;background:repeating-linear-gradient(90deg,#5a5a5a 0,#5a5a5a 1px,transparent 1px,transparent 2px)"></div>
<div class="a ui" style="left:57px;top:454.5px;font-size:14.6px;letter-spacing:-0.532px;line-height:20px;color:#fff;">312.5202MHz USB</div>
<div class="a" style="left:43px;top:488px;width:11px;height:1px;background:repeating-linear-gradient(90deg,#5a5a5a 0,#5a5a5a 1px,transparent 1px,transparent 2px)"></div>
<div class="a ui" style="left:57px;top:477.0px;font-size:14.6px;letter-spacing:-0.532px;line-height:20px;color:#fff;">273.4599MHz USB</div>
<div class="a" style="left:43px;top:511px;width:11px;height:1px;background:repeating-linear-gradient(90deg,#5a5a5a 0,#5a5a5a 1px,transparent 1px,transparent 2px)"></div>
<div class="a ui" style="left:57px;top:499.5px;font-size:14.6px;letter-spacing:-0.532px;line-height:20px;color:#fff;">247.4705MHz USB</div>
<div class="a" style="left:43px;top:533px;width:11px;height:1px;background:repeating-linear-gradient(90deg,#5a5a5a 0,#5a5a5a 1px,transparent 1px,transparent 2px)"></div>
<div class="a ui" style="left:57px;top:522.0px;font-size:14.6px;letter-spacing:-0.532px;line-height:20px;color:#fff;">359.999MHz USB</div>
<div class="a" style="left:43px;top:556px;width:11px;height:1px;background:repeating-linear-gradient(90deg,#5a5a5a 0,#5a5a5a 1px,transparent 1px,transparent 2px)"></div>
<div class="a ui" style="left:57px;top:544.5px;font-size:14.6px;letter-spacing:-0.532px;line-height:20px;color:#fff;">381.8567MHz USB</div>
<div class="a" style="left:43px;top:578px;width:11px;height:1px;background:repeating-linear-gradient(90deg,#5a5a5a 0,#5a5a5a 1px,transparent 1px,transparent 2px)"></div>
<div class="a ui" style="left:57px;top:567.0px;font-size:14.6px;letter-spacing:-0.532px;line-height:20px;color:#fff;">232.5957MHz USB</div>
<div class="a" style="left:43px;top:601px;width:11px;height:1px;background:repeating-linear-gradient(90deg,#5a5a5a 0,#5a5a5a 1px,transparent 1px,transparent 2px)"></div>
<div class="a ui" style="left:57px;top:589.5px;font-size:14.6px;letter-spacing:-0.532px;line-height:20px;color:#fff;">262.342MHz USB</div>
<div class="a" style="left:43px;top:623px;width:11px;height:1px;background:repeating-linear-gradient(90deg,#5a5a5a 0,#5a5a5a 1px,transparent 1px,transparent 2px)"></div>
<div class="a ui" style="left:57px;top:612.0px;font-size:14.6px;letter-spacing:-0.532px;line-height:20px;color:#fff;">277.5644MHz USB</div>
<div class="a" style="left:43px;top:646px;width:11px;height:1px;background:repeating-linear-gradient(90deg,#5a5a5a 0,#5a5a5a 1px,transparent 1px,transparent 2px)"></div>
<div class="a ui" style="left:57px;top:634.5px;font-size:14.6px;letter-spacing:-0.532px;line-height:20px;color:#fff;">237.6563MHz USB</div>
<div class="a" style="left:43px;top:668px;width:11px;height:1px;background:repeating-linear-gradient(90deg,#5a5a5a 0,#5a5a5a 1px,transparent 1px,transparent 2px)"></div>
<div class="a" style="left:55px;top:657.0px;width:123px;height:23px;background:#fff"></div>
<div class="a ui" style="left:57px;top:657.0px;font-size:14.6px;letter-spacing:-0.532px;line-height:20px;color:#111;">232.0036MHz USB</div>
<div class="a" style="left:19px;top:406px;width:1px;height:329px;background:repeating-linear-gradient(180deg,#5a5a5a 0,#5a5a5a 1px,transparent 1px,transparent 2px)"></div>
<div class="a" style="left:43px;top:410px;width:1px;height:259px;background:repeating-linear-gradient(180deg,#5a5a5a 0,#5a5a5a 1px,transparent 1px,transparent 2px)"></div>
<div class="a" style="left:14px;top:686px;width:11px;height:11px;background:#f4f4f4;border:1px solid #9a9a9a"></div><div class="a" style="left:17px;top:691px;width:5px;height:1px;background:#2b3a8c"></div><div class="a" style="left:19px;top:689px;width:1px;height:5px;background:#2b3a8c"></div>
<div class="a" style="left:26px;top:691px;width:5px;height:1px;background:repeating-linear-gradient(90deg,#5a5a5a 0,#5a5a5a 1px,transparent 1px,transparent 2px)"></div>
<div class="a ui" style="left:33px;top:679.5px;font-size:15px;letter-spacing:-0.580px;line-height:20px;color:#fff;">View Ranges</div>
<div class="a" style="left:19px;top:714px;width:12px;height:1px;background:repeating-linear-gradient(90deg,#5a5a5a 0,#5a5a5a 1px,transparent 1px,transparent 2px)"></div>
<div class="a ui" style="left:33px;top:702.0px;font-size:15px;letter-spacing:-0.225px;line-height:20px;color:#fff;">Bookmarks</div>
<div class="a" style="left:14px;top:731px;width:11px;height:11px;background:#f4f4f4;border:1px solid #9a9a9a"></div><div class="a" style="left:17px;top:736px;width:5px;height:1px;background:#2b3a8c"></div>
<div class="a" style="left:26px;top:736px;width:5px;height:1px;background:repeating-linear-gradient(90deg,#5a5a5a 0,#5a5a5a 1px,transparent 1px,transparent 2px)"></div>
<div class="a ui" style="left:33px;top:724.5px;font-size:15px;letter-spacing:-0.575px;line-height:20px;color:#fff;">Recents</div>
<div class="a" style="left:43px;top:758px;width:11px;height:1px;background:repeating-linear-gradient(90deg,#5a5a5a 0,#5a5a5a 1px,transparent 1px,transparent 2px)"></div>
<div class="a ui" style="left:57px;top:747.0px;font-size:14.6px;letter-spacing:-0.183px;line-height:20px;color:#fff;">3.700393MHz AM</div>
<div class="a" style="left:43px;top:781px;width:11px;height:1px;background:repeating-linear-gradient(90deg,#5a5a5a 0,#5a5a5a 1px,transparent 1px,transparent 2px)"></div>
<div class="a ui" style="left:57px;top:769.5px;font-size:14.6px;letter-spacing:-0.183px;line-height:20px;color:#fff;">5.960064MHz AM</div>
<div class="a" style="left:43px;top:747px;width:1px;height:49px;background:repeating-linear-gradient(180deg,#5a5a5a 0,#5a5a5a 1px,transparent 1px,transparent 2px)"></div>
<div class="a ui" style="left:7.8px;top:814px;font-size:15.0px;letter-spacing:-0.540px;line-height:20px;color:#fff;">Label</div>
<div class="a" style="left:49px;top:811px;width:208px;height:28px;background:#fff;border:1px solid #9a9a9a"></div>
<div class="a ui" style="left:14px;top:852px;font-size:15.0px;letter-spacing:-0.711px;line-height:20px;color:#fff;">Freq</div>
<div class="a ui" style="left:49px;top:852px;font-size:14.6px;letter-spacing:-0.309px;line-height:20px;color:#fff;">232.0036MHz</div>
<div class="a ui" style="left:20.4px;top:884px;font-size:15.0px;letter-spacing:-1.281px;line-height:20px;color:#fff;">BW</div>
<div class="a ui" style="left:49px;top:884px;font-size:14.6px;letter-spacing:-0.515px;line-height:20px;color:#fff;">23.46KHz</div>
<div class="a ui" style="left:10.4px;top:917px;font-size:15.0px;letter-spacing:-0.587px;line-height:20px;color:#fff;">Type</div>
<div class="a ui" style="left:49px;top:917px;font-size:14.6px;letter-spacing:-1.340px;line-height:20px;color:#fff;">USB</div>
<div class="a" style="left:7px;top:955px;width:257px;height:29px;background:#e2e2e2;border:1px solid #adadad"></div>
<div class="a ui" style="left:13px;top:961px;font-size:15.0px;letter-spacing:-0.186px;line-height:20px;color:#111;">Bookmark..</div>
<svg class="a" style="left:245px;top:965px" width="14" height="9" viewBox="0 0 14 9"><path d="M2 2 L7 7 L12 2" stroke="#444" stroke-width="1.3" fill="none"/></svg>
<div class="a" style="left:8px;top:986px;width:255px;height:30px;background:#e1e1e1;border:1px solid #adadad"></div>
<div class="a" style="left:13px;top:991px;width:245px;height:20px;background:#111"></div>
<div class="a ui" style="left:86.3px;top:991px;font-size:15.0px;letter-spacing:-0.167px;line-height:19px;color:#fff;">Remove Active</div>
<div class="a" style="left:275px;top:343px;width:1380px;height:174px;background:linear-gradient(180deg,#171717,#202020 40%,#343434)"></div>
<div class="a" style="left:275px;top:371px;width:1380px;height:1px;background:rgba(255,255,255,.1)"></div>
<div class="a" style="left:275px;top:412px;width:1380px;height:1px;background:rgba(255,255,255,.1)"></div>
<div class="a" style="left:275px;top:453px;width:1380px;height:1px;background:rgba(255,255,255,.1)"></div>
<div class="a" style="left:275px;top:494px;width:1380px;height:1px;background:rgba(255,255,255,.1)"></div>
<div class="a" style="left:966px;top:343px;width:4px;height:174px;background:rgba(255,255,255,.36)"></div>
<div class="a" style="left:1170px;top:343px;width:1px;height:174px;background:#8e8e8e"></div>
<svg class="a" style="left:275px;top:343px" width="1380" height="174" viewBox="0 0 1380 174"><path d="M0.0 151.2 L0.5 151.3 L1.0 151.4 L1.5 151.5 L2.0 151.6 L2.5 151.2 L3.0 151.3 L3.5 151.3 L4.0 151.6 L4.5 151.2 L5.0 151.2 L5.5 151.2 L6.0 151.3 L6.5 151.6 L7.0 151.6 L7.5 151.5 L8.0 151.6 L8.5 151.6 L9.0 151.3 L9.5 151.2 L10.0 151.6 L10.5 151.5 L11.0 151.2 L11.5 151.5 L12.0 151.3 L12.5 151.3 L13.0 151.3 L13.5 151.2 L14.0 151.1 L14.5 151.3 L15.0 151.3 L15.5 151.6 L16.0 151.2 L16.5 151.6 L17.0 151.2 L17.5 151.3 L18.0 151.5 L18.5 151.5 L19.0 151.3 L19.5 151.2 L20.0 151.4 L20.5 151.3 L21.0 151.6 L21.5 151.2 L22.0 151.3 L22.5 151.6 L23.0 151.1 L23.5 151.3 L24.0 151.5 L24.5 151.5 L25.0 151.1 L25.5 151.1 L26.0 151.2 L26.5 151.6 L27.0 151.3 L27.5 151.5 L28.0 151.6 L28.5 151.3 L29.0 151.3 L29.5 151.6 L30.0 151.4 L30.5 151.3 L31.0 151.5 L31.5 151.3 L32.0 151.3 L32.5 151.1 L33.0 151.5 L33.5 151.6 L34.0 151.4 L34.5 151.6 L35.0 151.1 L35.5 151.2 L36.0 151.4 L36.5 151.6 L37.0 151.6 L37.5 151.3 L38.0 151.2 L38.5 151.3 L39.0 151.4 L39.5 151.6 L40.0 151.2 L40.5 151.5 L41.0 151.5 L41.5 151.5 L42.0 151.5 L42.5 151.4 L43.0 151.3 L43.5 151.3 L44.0 151.3 L44.5 151.5 L45.0 151.1 L45.5 151.2 L46.0 151.5 L46.5 151.2 L47.0 151.1 L47.5 151.1 L48.0 151.4 L48.5 151.3 L49.0 151.6 L49.5 151.5 L50.0 151.6 L50.5 151.2 L51.0 151.1 L51.5 151.2 L52.0 151.4 L52.5 151.5 L53.0 151.3 L53.5 151.2 L54.0 151.3 L54.5 151.4 L55.0 151.4 L55.5 151.5 L56.0 151.5 L56.5 151.4 L57.0 151.2 L57.5 151.5 L58.0 151.2 L58.5 151.4 L59.0 151.3 L59.5 151.5 L60.0 151.2 L60.5 151.2 L61.0 151.2 L61.5 151.2 L62.0 151.5 L62.5 151.4 L63.0 151.3 L63.5 151.3 L64.0 151.6 L64.5 151.3 L65.0 151.2 L65.5 151.5 L66.0 151.4 L66.5 151.6 L67.0 151.1 L67.5 151.3 L68.0 151.5 L68.5 151.5 L69.0 151.5 L69.5 151.1 L70.0 151.2 L70.5 151.1 L71.0 151.2 L71.5 151.6 L72.0 151.4 L72.5 151.6 L73.0 151.3 L73.5 151.5 L74.0 151.3 L74.5 151.2 L75.0 151.5 L75.5 151.6 L76.0 151.1 L76.5 151.4 L77.0 151.4 L77.5 151.2 L78.0 151.3 L78.5 151.2 L79.0 151.2 L79.5 151.2 L80.0 151.4 L80.5 151.4 L81.0 151.2 L81.5 151.1 L82.0 151.2 L82.5 151.4 L83.0 151.2 L83.5 151.2 L84.0 151.2 L84.5 151.5 L85.0 151.3 L85.5 151.1 L86.0 151.1 L86.5 151.3 L87.0 151.3 L87.5 151.4 L88.0 151.1 L88.5 151.2 L89.0 151.4 L89.5 151.3 L90.0 151.2 L90.5 151.2 L91.0 151.5 L91.5 151.2 L92.0 151.4 L92.5 151.2 L93.0 151.3 L93.5 151.5 L94.0 151.6 L94.5 151.2 L95.0 151.2 L95.5 151.4 L96.0 151.2 L96.5 151.1 L97.0 151.5 L97.5 151.3 L98.0 151.5 L98.5 151.3 L99.0 151.5 L99.5 151.3 L100.0 151.1 L100.5 151.1 L101.0 151.3 L101.5 151.4 L102.0 151.5 L102.5 151.1 L103.0 151.4 L103.5 151.2 L104.0 151.3 L104.5 151.1 L105.0 151.2 L105.5 151.3 L106.0 151.5 L106.5 151.1 L107.0 151.3 L107.5 151.5 L108.0 151.5 L108.5 151.2 L109.0 151.1 L109.5 151.5 L110.0 151.5 L110.5 151.3 L111.0 151.1 L111.5 151.5 L112.0 151.2 L112.5 151.5 L113.0 151.4 L113.5 151.5 L114.0 151.1 L114.5 151.4 L115.0 151.2 L115.5 151.2 L116.0 151.5 L116.5 151.5 L117.0 151.1 L117.5 151.2 L118.0 151.2 L118.5 151.3 L119.0 151.2 L119.5 151.1 L120.0 151.2 L120.5 151.4 L121.0 151.5 L121.5 151.1 L122.0 151.3 L122.5 151.4 L123.0 151.1 L123.5 151.5 L124.0 151.1 L124.5 151.3 L125.0 151.3 L125.5 151.4 L126.0 151.2 L126.5 151.2 L127.0 151.3 L127.5 151.2 L128.0 151.4 L128.5 151.3 L129.0 151.3 L129.5 151.0 L130.0 151.3 L130.5 151.3 L131.0 151.2 L131.5 151.4 L132.0 151.4 L132.5 151.3 L133.0 151.1 L133.5 151.3 L134.0 151.1 L134.5 151.1 L135.0 151.2 L135.5 151.1 L136.0 151.3 L136.5 151.3 L137.0 151.0 L137.5 151.3 L138.0 151.1 L138.5 151.4 L139.0 151.4 L139.5 151.3 L140.0 151.1 L140.5 151.3 L141.0 151.2 L141.5 151.5 L142.0 151.1 L142.5 151.5 L143.0 151.5 L143.5 151.4 L144.0 151.4 L144.5 151.1 L145.0 151.5 L145.5 151.3 L146.0 151.5 L146.5 151.5 L147.0 151.1 L147.5 151.4 L148.0 151.5 L148.5 151.1 L149.0 151.2 L149.5 151.4 L150.0 151.1 L150.5 151.5 L151.0 151.2 L151.5 151.4 L152.0 151.1 L152.5 151.3 L153.0 151.5 L153.5 151.1 L154.0 151.1 L154.5 151.3 L155.0 151.2 L155.5 151.0 L156.0 151.1 L156.5 151.1 L157.0 151.5 L157.5 151.3 L158.0 151.5 L158.5 151.1 L159.0 151.4 L159.5 151.1 L160.0 151.3 L160.5 151.3 L161.0 151.2 L161.5 151.4 L162.0 151.3 L162.5 151.3 L163.0 151.4 L163.5 151.1 L164.0 151.5 L164.5 151.3 L165.0 151.2 L165.5 151.4 L166.0 151.1 L166.5 151.5 L167.0 151.3 L167.5 151.2 L168.0 151.4 L168.5 151.2 L169.0 151.1 L169.5 151.4 L170.0 151.0 L170.5 151.4 L171.0 151.1 L171.5 151.3 L172.0 151.5 L172.5 151.3 L173.0 151.3 L173.5 151.2 L174.0 151.0 L174.5 151.0 L175.0 151.1 L175.5 151.3 L176.0 151.2 L176.5 151.2 L177.0 151.4 L177.5 151.1 L178.0 151.1 L178.5 151.3 L179.0 151.0 L179.5 151.0 L180.0 151.2 L180.5 151.0 L181.0 151.2 L181.5 151.1 L182.0 151.3 L182.5 151.3 L183.0 151.1 L183.5 151.3 L184.0 151.2 L184.5 151.1 L185.0 151.5 L185.5 151.1 L186.0 151.1 L186.5 151.0 L187.0 151.3 L187.5 151.4 L188.0 151.4 L188.5 151.2 L189.0 151.1 L189.5 151.0 L190.0 151.3 L190.5 151.3 L191.0 151.2 L191.5 151.3 L192.0 151.2 L192.5 151.4 L193.0 151.3 L193.5 151.1 L194.0 151.4 L194.5 151.0 L195.0 151.2 L195.5 151.2 L196.0 151.1 L196.5 151.0 L197.0 151.4 L197.5 151.0 L198.0 151.2 L198.5 151.4 L199.0 151.0 L199.5 151.1 L200.0 151.3 L200.5 151.2 L201.0 151.3 L201.5 151.4 L202.0 151.1 L202.5 151.1 L203.0 151.1 L203.5 151.0 L204.0 151.4 L204.5 151.4 L205.0 151.3 L205.5 151.0 L206.0 151.4 L206.5 151.3 L207.0 151.2 L207.5 151.3 L208.0 151.2 L208.5 151.1 L209.0 151.0 L209.5 151.1 L210.0 151.0 L210.5 151.1 L211.0 151.3 L211.5 151.3 L212.0 151.4 L212.5 151.3 L213.0 151.1 L213.5 151.2 L214.0 151.2 L214.5 151.4 L215.0 151.2 L215.5 151.1 L216.0 151.3 L216.5 151.4 L217.0 151.1 L217.5 151.4 L218.0 151.0 L218.5 151.1 L219.0 151.1 L219.5 151.3 L220.0 151.4 L220.5 151.3 L221.0 151.1 L221.5 151.4 L222.0 151.1 L222.5 151.1 L223.0 151.4 L223.5 151.3 L224.0 151.3 L224.5 151.3 L225.0 151.4 L225.5 151.2 L226.0 151.4 L226.5 151.3 L227.0 151.4 L227.5 151.2 L228.0 151.3 L228.5 151.2 L229.0 151.1 L229.5 151.0 L230.0 151.3 L230.5 151.0 L231.0 151.4 L231.5 151.0 L232.0 150.9 L232.5 151.0 L233.0 151.4 L233.5 151.1 L234.0 151.0 L234.5 150.9 L235.0 150.9 L235.5 151.3 L236.0 151.2 L236.5 151.3 L237.0 151.3 L237.5 151.0 L238.0 151.2 L238.5 151.1 L239.0 151.3 L239.5 151.3 L240.0 151.4 L240.5 150.9 L241.0 151.3 L241.5 151.4 L242.0 151.4 L242.5 151.0 L243.0 151.0 L243.5 151.0 L244.0 150.9 L244.5 151.3 L245.0 151.3 L245.5 151.2 L246.0 151.3 L246.5 151.2 L247.0 151.0 L247.5 151.0 L248.0 150.9 L248.5 151.3 L249.0 151.0 L249.5 151.1 L250.0 151.1 L250.5 150.9 L251.0 151.0 L251.5 151.0 L252.0 151.3 L252.5 151.1 L253.0 151.1 L253.5 151.4 L254.0 151.1 L254.5 151.3 L255.0 151.2 L255.5 150.9 L256.0 151.1 L256.5 151.1 L257.0 151.3 L257.5 151.1 L258.0 151.2 L258.5 151.1 L259.0 151.0 L259.5 151.3 L260.0 150.9 L260.5 151.3 L261.0 151.0 L261.5 150.9 L262.0 151.0 L262.5 151.3 L263.0 151.4 L263.5 150.9 L264.0 151.1 L264.5 151.1 L265.0 151.3 L265.5 151.0 L266.0 151.1 L266.5 151.0 L267.0 151.3 L267.5 151.0 L268.0 151.3 L268.5 151.0 L269.0 151.0 L269.5 151.2 L270.0 151.1 L270.5 150.9 L271.0 151.2 L271.5 150.9 L272.0 151.2 L272.5 151.2 L273.0 151.2 L273.5 151.1 L274.0 151.0 L274.5 151.0 L275.0 151.0 L275.5 151.2 L276.0 150.8 L276.5 151.1 L277.0 150.6 L277.5 150.6 L278.0 150.4 L278.5 150.4 L279.0 149.5 L279.5 147.6 L280.0 143.1 L280.5 136.4 L281.0 137.3 L281.5 144.2 L282.0 148.3 L282.5 149.8 L283.0 150.4 L283.5 150.5 L284.0 150.7 L284.5 150.7 L285.0 151.1 L285.5 151.0 L286.0 151.1 L286.5 150.8 L287.0 151.0 L287.5 151.2 L288.0 151.1 L288.5 150.8 L289.0 151.0 L289.5 151.3 L290.0 150.9 L290.5 150.9 L291.0 151.0 L291.5 151.2 L292.0 151.2 L292.5 150.9 L293.0 150.9 L293.5 150.9 L294.0 151.0 L294.5 151.1 L295.0 150.9 L295.5 151.0 L296.0 150.9 L296.5 151.3 L297.0 151.2 L297.5 150.8 L298.0 151.3 L298.5 150.8 L299.0 151.0 L299.5 151.3 L300.0 151.2 L300.5 151.2 L301.0 151.0 L301.5 150.9 L302.0 151.1 L302.5 150.8 L303.0 150.9 L303.5 151.0 L304.0 150.8 L304.5 151.0 L305.0 151.2 L305.5 151.1 L306.0 151.0 L306.5 151.1 L307.0 151.0 L307.5 150.8 L308.0 151.1 L308.5 151.0 L309.0 151.1 L309.5 151.2 L310.0 151.0 L310.5 151.1 L311.0 151.1 L311.5 151.0 L312.0 150.9 L312.5 151.1 L313.0 151.2 L313.5 151.1 L314.0 151.1 L314.5 151.2 L315.0 151.1 L315.5 151.1 L316.0 151.0 L316.5 150.9 L317.0 151.1 L317.5 150.8 L318.0 151.0 L318.5 151.1 L319.0 151.1 L319.5 151.1 L320.0 150.9 L320.5 151.0 L321.0 151.0 L321.5 151.1 L322.0 150.9 L322.5 151.1 L323.0 151.2 L323.5 150.8 L324.0 151.1 L324.5 151.1 L325.0 150.9 L325.5 151.0 L326.0 151.2 L326.5 150.8 L327.0 151.0 L327.5 150.8 L328.0 151.1 L328.5 151.2 L329.0 151.0 L329.5 150.8 L330.0 151.0 L330.5 151.0 L331.0 151.1 L331.5 151.0 L332.0 151.0 L332.5 151.1 L333.0 151.0 L333.5 150.9 L334.0 151.2 L334.5 150.8 L335.0 151.1 L335.5 150.9 L336.0 151.1 L336.5 150.8 L337.0 151.2 L337.5 150.9 L338.0 150.7 L338.5 150.8 L339.0 150.9 L339.5 150.7 L340.0 150.9 L340.5 150.9 L341.0 151.1 L341.5 150.9 L342.0 150.8 L342.5 150.8 L343.0 151.1 L343.5 151.2 L344.0 151.0 L344.5 150.8 L345.0 151.1 L345.5 150.9 L346.0 150.8 L346.5 150.8 L347.0 151.1 L347.5 151.1 L348.0 151.0 L348.5 150.9 L349.0 151.0 L349.5 150.8 L350.0 151.2 L350.5 150.9 L351.0 151.0 L351.5 151.1 L352.0 151.1 L352.5 150.9 L353.0 150.8 L353.5 150.9 L354.0 150.7 L354.5 151.1 L355.0 150.8 L355.5 151.1 L356.0 150.8 L356.5 150.9 L357.0 150.8 L357.5 150.9 L358.0 150.8 L358.5 150.7 L359.0 151.0 L359.5 150.8 L360.0 150.8 L360.5 150.8 L361.0 150.9 L361.5 150.9 L362.0 151.0 L362.5 151.0 L363.0 150.8 L363.5 151.1 L364.0 151.1 L364.5 150.7 L365.0 151.1 L365.5 151.6 L366.0 151.4 L366.5 150.2 L367.0 151.5 L367.5 151.1 L368.0 150.0 L368.5 150.0 L369.0 151.7 L369.5 151.2 L370.0 150.4 L370.5 150.2 L371.0 150.2 L371.5 150.4 L372.0 151.4 L372.5 150.6 L373.0 150.2 L373.5 151.6 L374.0 151.4 L374.5 150.3 L375.0 151.6 L375.5 151.0 L376.0 151.3 L376.5 151.1 L377.0 151.5 L377.5 151.3 L378.0 151.3 L378.5 150.1 L379.0 151.0 L379.5 150.6 L380.0 150.8 L380.5 150.0 L381.0 150.4 L381.5 148.9 L382.0 146.2 L382.5 140.1 L383.0 125.9 L383.5 121.0 L384.0 132.1 L384.5 143.7 L385.0 147.1 L385.5 149.2 L386.0 149.9 L386.5 150.3 L387.0 151.1 L387.5 149.6 L388.0 151.2 L388.5 150.6 L389.0 150.8 L389.5 151.0 L390.0 151.3 L390.5 150.5 L391.0 150.6 L391.5 151.6 L392.0 150.0 L392.5 151.1 L393.0 151.1 L393.5 150.0 L394.0 151.0 L394.5 151.1 L395.0 151.6 L395.5 150.5 L396.0 151.7 L396.5 150.8 L397.0 150.8 L397.5 151.5 L398.0 150.0 L398.5 151.2 L399.0 151.0 L399.5 150.5 L400.0 151.4 L400.5 150.5 L401.0 150.7 L401.5 150.8 L402.0 151.3 L402.5 150.3 L403.0 150.7 L403.5 150.6 L404.0 150.9 L404.5 151.4 L405.0 150.4 L405.5 151.4 L406.0 150.6 L406.5 150.8 L407.0 150.3 L407.5 150.8 L408.0 151.6 L408.5 151.0 L409.0 151.3 L409.5 150.4 L410.0 150.4 L410.5 150.4 L411.0 150.9 L411.5 151.0 L412.0 151.3 L412.5 149.9 L413.0 151.1 L413.5 151.4 L414.0 150.8 L414.5 149.9 L415.0 150.4 L415.5 149.8 L416.0 150.2 L416.5 151.5 L417.0 150.9 L417.5 151.0 L418.0 151.2 L418.5 151.5 L419.0 150.9 L419.5 150.9 L420.0 150.9 L420.5 151.1 L421.0 150.9 L421.5 151.0 L422.0 150.2 L422.5 151.0 L423.0 150.6 L423.5 151.2 L424.0 150.0 L424.5 150.1 L425.0 149.9 L425.5 151.2 L426.0 151.4 L426.5 151.0 L427.0 150.5 L427.5 151.3 L428.0 151.2 L428.5 150.8 L429.0 150.3 L429.5 150.3 L430.0 150.5 L430.5 150.4 L431.0 150.6 L431.5 150.9 L432.0 151.5 L432.5 149.9 L433.0 150.8 L433.5 149.8 L434.0 150.0 L434.5 151.2 L435.0 150.8 L435.5 151.4 L436.0 150.6 L436.5 149.8 L437.0 150.5 L437.5 150.8 L438.0 151.4 L438.5 151.5 L439.0 150.6 L439.5 150.5 L440.0 149.9 L440.5 150.9 L441.0 150.1 L441.5 150.0 L442.0 149.8 L442.5 149.8 L443.0 151.0 L443.5 150.0 L444.0 151.5 L444.5 149.9 L445.0 151.3 L445.5 150.0 L446.0 149.8 L446.5 151.0 L447.0 150.2 L447.5 151.0 L448.0 150.1 L448.5 149.8 L449.0 151.1 L449.5 151.0 L450.0 151.3 L450.5 151.0 L451.0 149.9 L451.5 150.8 L452.0 151.0 L452.5 150.5 L453.0 151.4 L453.5 150.2 L454.0 151.4 L454.5 151.0 L455.0 149.7 L455.5 149.7 L456.0 150.9 L456.5 151.2 L457.0 149.8 L457.5 150.3 L458.0 151.0 L458.5 150.0 L459.0 151.2 L459.5 150.6 L460.0 149.8 L460.5 150.3 L461.0 150.7 L461.5 150.5 L462.0 150.9 L462.5 149.9 L463.0 151.1 L463.5 150.3 L464.0 150.8 L464.5 150.8 L465.0 150.4 L465.5 150.4 L466.0 151.1 L466.5 151.4 L467.0 151.1 L467.5 150.7 L468.0 150.2 L468.5 149.8 L469.0 151.4 L469.5 150.9 L470.0 151.1 L470.5 150.2 L471.0 150.7 L471.5 151.4 L472.0 151.1 L472.5 150.7 L473.0 150.2 L473.5 150.4 L474.0 151.2 L474.5 150.3 L475.0 150.9 L475.5 150.7 L476.0 151.2 L476.5 151.1 L477.0 150.1 L477.5 149.6 L478.0 150.1 L478.5 150.3 L479.0 150.6 L479.5 151.0 L480.0 151.1 L480.5 149.5 L481.0 150.9 L481.5 150.8 L482.0 150.8 L482.5 150.1 L483.0 149.3 L483.5 149.9 L484.0 148.8 L484.5 146.4 L485.0 140.9 L485.5 124.5 L486.0 113.2 L486.5 124.8 L487.0 140.7 L487.5 145.5 L488.0 148.7 L488.5 150.0 L489.0 149.2 L489.5 150.1 L490.0 150.4 L490.5 150.1 L491.0 149.7 L491.5 149.8 L492.0 150.7 L492.5 150.8 L493.0 150.3 L493.5 149.6 L494.0 151.0 L494.5 150.9 L495.0 149.9 L495.5 150.5 L496.0 151.1 L496.5 151.1 L497.0 150.4 L497.5 150.3 L498.0 150.5 L498.5 149.8 L499.0 149.8 L499.5 149.8 L500.0 150.7 L500.5 150.1 L501.0 150.5 L501.5 150.2 L502.0 150.4 L502.5 149.7 L503.0 149.5 L503.5 151.2 L504.0 150.1 L504.5 149.6 L505.0 150.5 L505.5 150.8 L506.0 149.6 L506.5 150.4 L507.0 149.9 L507.5 150.2 L508.0 149.3 L508.5 149.2 L509.0 150.9 L509.5 150.5 L510.0 149.6 L510.5 149.4 L511.0 148.3 L511.5 148.8 L512.0 148.1 L512.5 149.1 L513.0 149.2 L513.5 149.8 L514.0 150.4 L514.5 149.3 L515.0 149.1 L515.5 149.5 L516.0 149.5 L516.5 149.3 L517.0 149.3 L517.5 150.2 L518.0 150.8 L518.5 150.0 L519.0 150.9 L519.5 150.9 L520.0 149.4 L520.5 150.3 L521.0 150.0 L521.5 149.5 L522.0 151.0 L522.5 149.7 L523.0 150.2 L523.5 150.4 L524.0 150.9 L524.5 150.4 L525.0 149.9 L525.5 150.0 L526.0 149.5 L526.5 150.9 L527.0 151.0 L527.5 149.6 L528.0 149.2 L528.5 149.6 L529.0 149.8 L529.5 150.8 L530.0 150.8 L530.5 150.7 L531.0 149.2 L531.5 150.6 L532.0 150.4 L532.5 150.3 L533.0 150.9 L533.5 149.2 L534.0 149.4 L534.5 150.5 L535.0 150.8 L535.5 150.3 L536.0 149.6 L536.5 150.1 L537.0 150.4 L537.5 149.3 L538.0 149.7 L538.5 149.5 L539.0 149.3 L539.5 149.9 L540.0 149.4 L540.5 149.5 L541.0 149.3 L541.5 150.3 L542.0 149.1 L542.5 150.3 L543.0 149.4 L543.5 149.1 L544.0 150.7 L544.5 149.4 L545.0 150.7 L545.5 150.6 L546.0 150.6 L546.5 149.2 L547.0 149.8 L547.5 149.1 L548.0 150.6 L548.5 150.5 L549.0 150.1 L549.5 149.8 L550.0 149.6 L550.5 150.4 L551.0 149.8 L551.5 150.1 L552.0 149.2 L552.5 149.3 L553.0 149.0 L553.5 150.2 L554.0 149.9 L554.5 149.2 L555.0 150.5 L555.5 149.4 L556.0 149.6 L556.5 149.1 L557.0 149.3 L557.5 150.3 L558.0 149.4 L558.5 149.1 L559.0 149.7 L559.5 149.4 L560.0 150.4 L560.5 149.0 L561.0 150.5 L561.5 148.8 L562.0 150.3 L562.5 149.9 L563.0 149.1 L563.5 149.5 L564.0 149.2 L564.5 149.1 L565.0 149.0 L565.5 149.3 L566.0 150.4 L566.5 150.4 L567.0 150.3 L567.5 148.8 L568.0 149.1 L568.5 150.2 L569.0 148.6 L569.5 149.8 L570.0 149.0 L570.5 150.3 L571.0 148.5 L571.5 149.9 L572.0 149.1 L572.5 148.7 L573.0 148.4 L573.5 149.9 L574.0 149.4 L574.5 148.7 L575.0 149.2 L575.5 150.0 L576.0 148.7 L576.5 149.4 L577.0 148.6 L577.5 148.6 L578.0 149.7 L578.5 149.6 L579.0 148.6 L579.5 148.4 L580.0 148.4 L580.5 149.3 L581.0 149.0 L581.5 148.6 L582.0 148.4 L582.5 149.1 L583.0 149.3 L583.5 149.4 L584.0 148.9 L584.5 148.1 L585.0 147.7 L585.5 148.6 L586.0 147.6 L586.5 147.4 L587.0 144.6 L587.5 141.9 L588.0 128.8 L588.5 101.9 L589.0 98.0 L589.5 124.5 L590.0 138.9 L590.5 145.5 L591.0 146.6 L591.5 148.2 L592.0 147.6 L592.5 147.7 L593.0 149.0 L593.5 148.2 L594.0 147.9 L594.5 148.4 L595.0 148.8 L595.5 147.7 L596.0 148.7 L596.5 148.5 L597.0 148.7 L597.5 148.0 L598.0 149.1 L598.5 149.2 L599.0 149.3 L599.5 148.3 L600.0 149.0 L600.5 148.4 L601.0 149.1 L601.5 147.8 L602.0 149.2 L602.5 149.4 L603.0 148.5 L603.5 148.6 L604.0 148.6 L604.5 148.6 L605.0 147.6 L605.5 149.3 L606.0 147.9 L606.5 147.8 L607.0 147.7 L607.5 147.9 L608.0 148.9 L608.5 147.5 L609.0 147.5 L609.5 148.6 L610.0 147.7 L610.5 147.3 L611.0 148.3 L611.5 148.3 L612.0 148.1 L612.5 148.4 L613.0 147.3 L613.5 148.7 L614.0 148.4 L614.5 147.1 L615.0 147.3 L615.5 147.9 L616.0 147.9 L616.5 147.4 L617.0 147.1 L617.5 147.6 L618.0 147.1 L618.5 147.9 L619.0 148.3 L619.5 147.0 L620.0 147.8 L620.5 148.1 L621.0 147.0 L621.5 148.1 L622.0 148.3 L622.5 147.2 L623.0 147.3 L623.5 148.0 L624.0 147.4 L624.5 147.1 L625.0 148.0 L625.5 147.8 L626.0 146.6 L626.5 146.2 L627.0 146.2 L627.5 146.2 L628.0 147.2 L628.5 145.9 L629.0 145.2 L629.5 144.1 L630.0 144.0 L630.5 142.1 L631.0 144.1 L631.5 146.2 L632.0 146.8 L632.5 145.4 L633.0 146.1 L633.5 146.8 L634.0 146.2 L634.5 146.7 L635.0 145.5 L635.5 146.5 L636.0 146.6 L636.5 145.4 L637.0 145.7 L637.5 147.8 L638.0 147.3 L638.5 147.7 L639.0 146.9 L639.5 147.3 L640.0 147.5 L640.5 147.4 L641.0 145.2 L641.5 146.7 L642.0 145.6 L642.5 146.7 L643.0 145.5 L643.5 146.2 L644.0 147.1 L644.5 146.3 L645.0 145.2 L645.5 145.9 L646.0 145.6 L646.5 146.9 L647.0 145.1 L647.5 145.1 L648.0 145.9 L648.5 144.5 L649.0 145.6 L649.5 146.5 L650.0 145.3 L650.5 144.6 L651.0 145.0 L651.5 145.2 L652.0 144.1 L652.5 144.0 L653.0 143.9 L653.5 144.3 L654.0 144.5 L654.5 144.1 L655.0 144.0 L655.5 143.5 L656.0 144.6 L656.5 145.3 L657.0 144.7 L657.5 144.5 L658.0 144.6 L658.5 143.4 L659.0 144.7 L659.5 144.0 L660.0 144.1 L660.5 144.1 L661.0 143.6 L661.5 143.0 L662.0 142.7 L662.5 142.5 L663.0 143.1 L663.5 142.6 L664.0 143.0 L664.5 141.3 L665.0 142.1 L665.5 143.2 L666.0 141.5 L666.5 142.1 L667.0 141.8 L667.5 141.1 L668.0 142.8 L668.5 140.9 L669.0 141.9 L669.5 140.2 L670.0 139.8 L670.5 141.7 L671.0 140.5 L671.5 139.3 L672.0 140.0 L672.5 140.0 L673.0 140.6 L673.5 138.5 L674.0 138.4 L674.5 139.9 L675.0 138.9 L675.5 136.9 L676.0 137.0 L676.5 136.6 L677.0 137.0 L677.5 136.4 L678.0 136.5 L678.5 136.0 L679.0 134.8 L679.5 134.9 L680.0 134.5 L680.5 134.1 L681.0 132.9 L681.5 132.7 L682.0 131.5 L682.5 131.1 L683.0 128.0 L683.5 129.0 L684.0 125.7 L684.5 126.7 L685.0 125.2 L685.5 124.0 L686.0 123.3 L686.5 119.5 L687.0 116.0 L687.5 112.7 L688.0 109.2 L688.5 105.6 L689.0 101.9 L689.5 87.9 L690.0 73.8 L690.5 59.9 L691.0 47.1 L691.5 34.9 L692.0 47.3 L692.5 60.1 L693.0 75.6 L693.5 91.5 L694.0 107.2 L694.5 111.0 L695.0 115.0 L695.5 118.8 L696.0 122.9 L696.5 126.8 L697.0 131.0 L697.5 132.1 L698.0 131.7 L698.5 134.8 L699.0 134.1 L699.5 136.4 L700.0 137.3 L700.5 138.5 L701.0 137.4 L701.5 138.9 L702.0 141.1 L702.5 139.0 L703.0 139.4 L703.5 141.1 L704.0 141.2 L704.5 142.7 L705.0 142.6 L705.5 142.3 L706.0 143.8 L706.5 142.9 L707.0 143.2 L707.5 143.9 L708.0 143.5 L708.5 143.7 L709.0 144.6 L709.5 144.3 L710.0 146.2 L710.5 145.5 L711.0 145.2 L711.5 144.2 L712.0 145.0 L712.5 145.2 L713.0 145.7 L713.5 145.8 L714.0 146.7 L714.5 147.0 L715.0 145.8 L715.5 145.8 L716.0 146.3 L716.5 147.4 L717.0 145.8 L717.5 146.3 L718.0 147.2 L718.5 145.6 L719.0 146.0 L719.5 147.8 L720.0 147.5 L720.5 146.8 L721.0 145.8 L721.5 147.9 L722.0 147.5 L722.5 147.9 L723.0 148.4 L723.5 148.3 L724.0 147.1 L724.5 146.5 L725.0 147.0 L725.5 147.6 L726.0 147.6 L726.5 146.8 L727.0 146.8 L727.5 148.0 L728.0 147.9 L728.5 147.3 L729.0 149.0 L729.5 148.1 L730.0 146.6 L730.5 147.5 L731.0 148.5 L731.5 147.3 L732.0 148.3 L732.5 146.6 L733.0 147.4 L733.5 148.8 L734.0 148.2 L734.5 148.4 L735.0 147.5 L735.5 148.0 L736.0 148.1 L736.5 147.7 L737.0 148.4 L737.5 148.2 L738.0 149.0 L738.5 148.3 L739.0 148.0 L739.5 147.5 L740.0 147.6 L740.5 148.7 L741.0 147.6 L741.5 147.6 L742.0 147.8 L742.5 148.4 L743.0 149.0 L743.5 148.6 L744.0 149.0 L744.5 147.7 L745.0 147.6 L745.5 149.0 L746.0 148.2 L746.5 149.0 L747.0 148.3 L747.5 148.0 L748.0 148.2 L748.5 148.0 L749.0 149.4 L749.5 148.9 L750.0 148.5 L750.5 148.7 L751.0 148.6 L751.5 148.0 L752.0 149.6 L752.5 149.0 L753.0 149.7 L753.5 148.8 L754.0 149.2 L754.5 148.5 L755.0 148.2 L755.5 149.8 L756.0 149.6 L756.5 148.7 L757.0 149.7 L757.5 149.6 L758.0 148.7 L758.5 149.2 L759.0 149.9 L759.5 149.0 L760.0 149.9 L760.5 148.6 L761.0 148.9 L761.5 149.5 L762.0 148.6 L762.5 148.7 L763.0 149.8 L763.5 149.1 L764.0 149.6 L764.5 148.6 L765.0 148.5 L765.5 148.9 L766.0 148.6 L766.5 150.0 L767.0 148.8 L767.5 149.3 L768.0 148.5 L768.5 149.2 L769.0 149.0 L769.5 149.0 L770.0 148.4 L770.5 148.5 L771.0 149.8 L771.5 148.9 L772.0 148.7 L772.5 148.6 L773.0 148.8 L773.5 148.7 L774.0 148.4 L774.5 149.5 L775.0 148.9 L775.5 148.6 L776.0 149.6 L776.5 148.5 L777.0 148.8 L777.5 149.9 L778.0 148.6 L778.5 149.2 L779.0 149.9 L779.5 149.8 L780.0 148.7 L780.5 149.0 L781.0 149.7 L781.5 149.1 L782.0 150.1 L782.5 148.8 L783.0 150.1 L783.5 149.3 L784.0 148.8 L784.5 149.3 L785.0 148.7 L785.5 149.7 L786.0 148.9 L786.5 150.0 L787.0 149.4 L787.5 149.0 L788.0 148.7 L788.5 149.3 L789.0 148.6 L789.5 149.7 L790.0 148.2 L790.5 148.7 L791.0 148.5 L791.5 147.5 L792.0 147.4 L792.5 144.6 L793.0 140.1 L793.5 125.5 L794.0 96.9 L794.5 93.4 L795.0 119.7 L795.5 137.4 L796.0 144.8 L796.5 146.3 L797.0 148.1 L797.5 147.7 L798.0 148.8 L798.5 148.7 L799.0 149.1 L799.5 148.8 L800.0 148.5 L800.5 149.0 L801.0 148.9 L801.5 148.7 L802.0 149.8 L802.5 149.2 L803.0 149.4 L803.5 150.3 L804.0 150.1 L804.5 150.3 L805.0 150.2 L805.5 148.9 L806.0 149.2 L806.5 148.7 L807.0 149.9 L807.5 149.9 L808.0 149.3 L808.5 149.5 L809.0 149.9 L809.5 150.0 L810.0 149.2 L810.5 150.3 L811.0 149.4 L811.5 149.9 L812.0 149.1 L812.5 149.0 L813.0 150.4 L813.5 150.1 L814.0 150.1 L814.5 148.9 L815.0 148.9 L815.5 149.1 L816.0 149.2 L816.5 149.3 L817.0 149.5 L817.5 148.9 L818.0 149.4 L818.5 150.0 L819.0 149.2 L819.5 150.3 L820.0 149.9 L820.5 150.1 L821.0 149.3 L821.5 149.6 L822.0 150.1 L822.5 149.5 L823.0 148.9 L823.5 150.4 L824.0 150.3 L824.5 149.4 L825.0 149.0 L825.5 150.4 L826.0 150.0 L826.5 149.0 L827.0 149.3 L827.5 149.1 L828.0 150.3 L828.5 149.3 L829.0 150.6 L829.5 150.3 L830.0 149.1 L830.5 150.2 L831.0 149.6 L831.5 150.3 L832.0 150.4 L832.5 149.4 L833.0 149.1 L833.5 150.6 L834.0 149.7 L834.5 150.6 L835.0 150.2 L835.5 150.3 L836.0 150.4 L836.5 150.1 L837.0 149.8 L837.5 149.0 L838.0 150.2 L838.5 149.7 L839.0 149.9 L839.5 150.6 L840.0 149.2 L840.5 150.3 L841.0 149.0 L841.5 150.2 L842.0 150.4 L842.5 149.4 L843.0 150.0 L843.5 150.7 L844.0 150.1 L844.5 150.0 L845.0 149.4 L845.5 149.1 L846.0 149.6 L846.5 149.7 L847.0 149.4 L847.5 149.5 L848.0 149.2 L848.5 150.3 L849.0 150.2 L849.5 149.4 L850.0 149.4 L850.5 149.9 L851.0 149.8 L851.5 150.7 L852.0 149.6 L852.5 149.5 L853.0 150.6 L853.5 149.3 L854.0 150.0 L854.5 149.6 L855.0 150.5 L855.5 150.0 L856.0 150.4 L856.5 149.3 L857.0 150.2 L857.5 150.1 L858.0 149.9 L858.5 150.4 L859.0 150.5 L859.5 149.2 L860.0 149.6 L860.5 149.7 L861.0 149.4 L861.5 149.2 L862.0 149.6 L862.5 149.4 L863.0 150.3 L863.5 149.9 L864.0 149.3 L864.5 149.6 L865.0 149.9 L865.5 149.7 L866.0 149.4 L866.5 149.2 L867.0 149.1 L867.5 150.9 L868.0 150.4 L868.5 149.2 L869.0 150.4 L869.5 150.8 L870.0 150.1 L870.5 149.3 L871.0 150.0 L871.5 149.9 L872.0 149.4 L872.5 150.1 L873.0 149.1 L873.5 150.7 L874.0 150.3 L874.5 150.2 L875.0 150.8 L875.5 150.3 L876.0 149.6 L876.5 149.5 L877.0 149.4 L877.5 149.2 L878.0 150.5 L878.5 150.6 L879.0 149.6 L879.5 149.5 L880.0 150.3 L880.5 150.6 L881.0 150.8 L881.5 149.4 L882.0 150.5 L882.5 150.6 L883.0 150.5 L883.5 149.7 L884.0 149.5 L884.5 150.6 L885.0 149.7 L885.5 149.8 L886.0 150.1 L886.5 149.8 L887.0 150.6 L887.5 149.6 L888.0 149.2 L888.5 150.2 L889.0 150.2 L889.5 150.5 L890.0 150.2 L890.5 150.6 L891.0 150.6 L891.5 149.7 L892.0 149.6 L892.5 148.8 L893.0 148.8 L893.5 148.9 L894.0 147.2 L894.5 146.9 L895.0 142.7 L895.5 134.6 L896.0 112.0 L896.5 84.8 L897.0 96.6 L897.5 127.7 L898.0 140.3 L898.5 146.0 L899.0 146.7 L899.5 149.1 L900.0 149.7 L900.5 149.9 L901.0 149.4 L901.5 149.3 L902.0 150.1 L902.5 149.9 L903.0 149.8 L903.5 149.7 L904.0 149.9 L904.5 150.3 L905.0 150.7 L905.5 150.8 L906.0 149.5 L906.5 149.8 L907.0 150.0 L907.5 150.2 L908.0 149.9 L908.5 149.6 L909.0 149.4 L909.5 149.8 L910.0 150.1 L910.5 151.0 L911.0 150.9 L911.5 150.8 L912.0 151.0 L912.5 151.0 L913.0 150.4 L913.5 150.7 L914.0 149.4 L914.5 150.5 L915.0 150.4 L915.5 149.8 L916.0 150.3 L916.5 151.0 L917.0 150.1 L917.5 150.4 L918.0 149.8 L918.5 149.9 L919.0 150.9 L919.5 149.3 L920.0 149.6 L920.5 150.5 L921.0 150.1 L921.5 149.4 L922.0 150.5 L922.5 150.0 L923.0 150.3 L923.5 150.0 L924.0 150.2 L924.5 150.3 L925.0 150.0 L925.5 149.5 L926.0 149.6 L926.5 150.9 L927.0 150.3 L927.5 149.5 L928.0 150.9 L928.5 149.8 L929.0 149.5 L929.5 150.2 L930.0 149.7 L930.5 150.2 L931.0 150.3 L931.5 149.6 L932.0 150.2 L932.5 149.3 L933.0 149.9 L933.5 149.9 L934.0 148.6 L934.5 148.7 L935.0 148.0 L935.5 148.8 L936.0 150.0 L936.5 149.8 L937.0 150.3 L937.5 150.5 L938.0 149.4 L938.5 151.1 L939.0 150.6 L939.5 149.5 L940.0 150.8 L940.5 150.0 L941.0 149.7 L941.5 151.1 L942.0 150.4 L942.5 150.8 L943.0 149.6 L943.5 150.8 L944.0 149.5 L944.5 149.8 L945.0 150.1 L945.5 149.4 L946.0 150.5 L946.5 149.8 L947.0 149.9 L947.5 150.7 L948.0 150.2 L948.5 151.0 L949.0 150.5 L949.5 151.0 L950.0 150.4 L950.5 151.1 L951.0 151.0 L951.5 149.7 L952.0 150.8 L952.5 150.0 L953.0 150.8 L953.5 150.7 L954.0 150.9 L954.5 149.7 L955.0 150.1 L955.5 150.8 L956.0 151.1 L956.5 150.7 L957.0 149.5 L957.5 150.5 L958.0 149.6 L958.5 150.4 L959.0 150.9 L959.5 149.7 L960.0 151.1 L960.5 150.7 L961.0 149.9 L961.5 149.8 L962.0 150.3 L962.5 151.0 L963.0 150.5 L963.5 149.7 L964.0 149.5 L964.5 149.7 L965.0 150.9 L965.5 149.8 L966.0 150.5 L966.5 150.0 L967.0 150.7 L967.5 150.2 L968.0 149.8 L968.5 151.1 L969.0 150.5 L969.5 150.7 L970.0 151.0 L970.5 151.2 L971.0 149.5 L971.5 150.1 L972.0 149.8 L972.5 150.4 L973.0 151.1 L973.5 151.0 L974.0 149.6 L974.5 149.8 L975.0 151.0 L975.5 150.7 L976.0 150.2 L976.5 150.4 L977.0 149.8 L977.5 151.1 L978.0 150.2 L978.5 151.1 L979.0 150.6 L979.5 149.7 L980.0 150.1 L980.5 149.9 L981.0 151.2 L981.5 150.6 L982.0 149.6 L982.5 149.9 L983.0 150.2 L983.5 150.4 L984.0 150.6 L984.5 150.3 L985.0 150.2 L985.5 149.6 L986.0 150.6 L986.5 150.2 L987.0 149.6 L987.5 150.4 L988.0 151.4 L988.5 149.7 L989.0 149.8 L989.5 150.8 L990.0 150.1 L990.5 150.1 L991.0 150.5 L991.5 150.0 L992.0 150.5 L992.5 150.5 L993.0 151.2 L993.5 151.2 L994.0 149.5 L994.5 150.4 L995.0 150.7 L995.5 150.7 L996.0 150.4 L996.5 149.8 L997.0 149.2 L997.5 147.4 L998.0 144.1 L998.5 136.9 L999.0 122.8 L999.5 121.3 L1000.0 134.0 L1000.5 143.1 L1001.0 147.7 L1001.5 149.2 L1002.0 149.5 L1002.5 150.1 L1003.0 149.8 L1003.5 150.3 L1004.0 150.1 L1004.5 149.6 L1005.0 150.1 L1005.5 150.1 L1006.0 151.3 L1006.5 150.4 L1007.0 150.3 L1007.5 150.1 L1008.0 150.1 L1008.5 150.3 L1009.0 149.9 L1009.5 149.7 L1010.0 151.2 L1010.5 150.5 L1011.0 150.5 L1011.5 150.7 L1012.0 150.2 L1012.5 150.0 L1013.0 149.8 L1013.5 150.2 L1014.0 150.3 L1014.5 151.0 L1015.0 150.6 L1015.5 150.8 L1016.0 150.5 L1016.5 150.8 L1017.0 150.6 L1017.5 150.4 L1018.0 150.4 L1018.5 150.6 L1019.0 150.9 L1019.5 150.5 L1020.0 150.7 L1020.5 150.6 L1021.0 150.8 L1021.5 150.4 L1022.0 150.6 L1022.5 150.8 L1023.0 150.5 L1023.5 150.5 L1024.0 150.4 L1024.5 150.4 L1025.0 150.5 L1025.5 150.7 L1026.0 150.5 L1026.5 150.6 L1027.0 150.5 L1027.5 150.7 L1028.0 150.8 L1028.5 150.7 L1029.0 150.5 L1029.5 150.7 L1030.0 150.9 L1030.5 150.7 L1031.0 150.4 L1031.5 150.8 L1032.0 150.8 L1032.5 150.6 L1033.0 150.5 L1033.5 150.5 L1034.0 150.7 L1034.5 150.8 L1035.0 150.7 L1035.5 150.8 L1036.0 150.5 L1036.5 150.6 L1037.0 150.8 L1037.5 150.7 L1038.0 150.6 L1038.5 150.7 L1039.0 150.6 L1039.5 150.4 L1040.0 150.6 L1040.5 150.4 L1041.0 150.7 L1041.5 150.6 L1042.0 150.6 L1042.5 150.7 L1043.0 150.5 L1043.5 150.6 L1044.0 150.4 L1044.5 150.9 L1045.0 150.7 L1045.5 150.9 L1046.0 150.4 L1046.5 150.7 L1047.0 150.8 L1047.5 150.6 L1048.0 150.5 L1048.5 150.5 L1049.0 150.5 L1049.5 150.8 L1050.0 150.5 L1050.5 150.8 L1051.0 150.6 L1051.5 150.7 L1052.0 150.7 L1052.5 150.7 L1053.0 150.7 L1053.5 150.7 L1054.0 150.6 L1054.5 150.8 L1055.0 150.6 L1055.5 150.8 L1056.0 150.8 L1056.5 150.8 L1057.0 150.6 L1057.5 150.8 L1058.0 150.9 L1058.5 150.7 L1059.0 150.6 L1059.5 150.7 L1060.0 150.9 L1060.5 150.5 L1061.0 150.4 L1061.5 150.7 L1062.0 150.8 L1062.5 150.8 L1063.0 150.6 L1063.5 150.9 L1064.0 150.6 L1064.5 150.8 L1065.0 150.5 L1065.5 150.5 L1066.0 150.5 L1066.5 150.5 L1067.0 150.7 L1067.5 150.7 L1068.0 150.5 L1068.5 150.9 L1069.0 150.6 L1069.5 150.5 L1070.0 150.5 L1070.5 150.8 L1071.0 150.9 L1071.5 150.5 L1072.0 150.5 L1072.5 150.8 L1073.0 150.6 L1073.5 150.9 L1074.0 150.7 L1074.5 150.8 L1075.0 150.6 L1075.5 150.9 L1076.0 150.7 L1076.5 150.6 L1077.0 150.9 L1077.5 150.5 L1078.0 150.8 L1078.5 150.5 L1079.0 150.8 L1079.5 150.7 L1080.0 150.9 L1080.5 150.5 L1081.0 150.8 L1081.5 150.7 L1082.0 150.9 L1082.5 150.9 L1083.0 150.8 L1083.5 150.6 L1084.0 150.6 L1084.5 150.6 L1085.0 150.7 L1085.5 150.6 L1086.0 150.6 L1086.5 150.9 L1087.0 150.8 L1087.5 150.6 L1088.0 151.0 L1088.5 150.6 L1089.0 150.8 L1089.5 150.6 L1090.0 150.9 L1090.5 150.9 L1091.0 150.6 L1091.5 150.9 L1092.0 150.9 L1092.5 150.6 L1093.0 150.7 L1093.5 150.7 L1094.0 150.9 L1094.5 150.5 L1095.0 150.8 L1095.5 150.7 L1096.0 150.6 L1096.5 150.7 L1097.0 150.8 L1097.5 150.4 L1098.0 150.7 L1098.5 150.3 L1099.0 150.4 L1099.5 150.1 L1100.0 149.3 L1100.5 148.6 L1101.0 146.1 L1101.5 137.6 L1102.0 108.8 L1102.5 91.3 L1103.0 124.4 L1103.5 142.0 L1104.0 147.5 L1104.5 148.8 L1105.0 149.8 L1105.5 149.9 L1106.0 150.1 L1106.5 150.5 L1107.0 150.3 L1107.5 150.5 L1108.0 150.8 L1108.5 150.8 L1109.0 150.9 L1109.5 150.9 L1110.0 150.5 L1110.5 150.6 L1111.0 150.9 L1111.5 150.9 L1112.0 150.5 L1112.5 150.8 L1113.0 150.6 L1113.5 150.7 L1114.0 150.6 L1114.5 150.5 L1115.0 151.0 L1115.5 150.7 L1116.0 151.0 L1116.5 150.6 L1117.0 150.8 L1117.5 150.6 L1118.0 150.8 L1118.5 150.6 L1119.0 150.9 L1119.5 150.6 L1120.0 150.9 L1120.5 150.8 L1121.0 150.6 L1121.5 150.7 L1122.0 150.8 L1122.5 151.0 L1123.0 150.7 L1123.5 150.7 L1124.0 151.0 L1124.5 151.0 L1125.0 150.9 L1125.5 150.7 L1126.0 150.6 L1126.5 150.7 L1127.0 150.6 L1127.5 150.6 L1128.0 150.8 L1128.5 150.8 L1129.0 150.8 L1129.5 150.7 L1130.0 150.6 L1130.5 150.9 L1131.0 150.9 L1131.5 150.8 L1132.0 150.8 L1132.5 150.9 L1133.0 151.1 L1133.5 151.0 L1134.0 150.9 L1134.5 150.8 L1135.0 150.7 L1135.5 150.8 L1136.0 151.1 L1136.5 150.8 L1137.0 150.8 L1137.5 150.8 L1138.0 150.6 L1138.5 151.1 L1139.0 150.6 L1139.5 150.9 L1140.0 151.0 L1140.5 150.7 L1141.0 150.9 L1141.5 150.8 L1142.0 150.7 L1142.5 150.7 L1143.0 150.6 L1143.5 151.0 L1144.0 151.0 L1144.5 151.0 L1145.0 150.6 L1145.5 150.9 L1146.0 150.7 L1146.5 150.9 L1147.0 150.9 L1147.5 150.7 L1148.0 151.1 L1148.5 150.6 L1149.0 151.0 L1149.5 151.0 L1150.0 150.8 L1150.5 150.9 L1151.0 151.1 L1151.5 150.7 L1152.0 150.9 L1152.5 151.0 L1153.0 150.8 L1153.5 151.0 L1154.0 150.8 L1154.5 150.9 L1155.0 150.9 L1155.5 150.9 L1156.0 150.8 L1156.5 150.9 L1157.0 150.9 L1157.5 150.7 L1158.0 150.9 L1158.5 150.7 L1159.0 151.1 L1159.5 150.8 L1160.0 151.0 L1160.5 150.9 L1161.0 150.8 L1161.5 150.7 L1162.0 150.7 L1162.5 151.1 L1163.0 150.9 L1163.5 150.9 L1164.0 150.9 L1164.5 151.0 L1165.0 150.7 L1165.5 150.7 L1166.0 151.0 L1166.5 150.8 L1167.0 150.9 L1167.5 151.0 L1168.0 151.1 L1168.5 151.1 L1169.0 150.6 L1169.5 150.8 L1170.0 151.0 L1170.5 151.0 L1171.0 150.7 L1171.5 150.7 L1172.0 150.7 L1172.5 150.7 L1173.0 150.8 L1173.5 151.0 L1174.0 150.9 L1174.5 150.9 L1175.0 150.7 L1175.5 150.8 L1176.0 151.1 L1176.5 151.0 L1177.0 150.9 L1177.5 150.9 L1178.0 151.0 L1178.5 151.0 L1179.0 150.7 L1179.5 151.0 L1180.0 150.8 L1180.5 150.9 L1181.0 150.8 L1181.5 150.8 L1182.0 150.8 L1182.5 150.8 L1183.0 150.6 L1183.5 150.7 L1184.0 150.9 L1184.5 150.7 L1185.0 150.7 L1185.5 151.0 L1186.0 150.8 L1186.5 150.8 L1187.0 150.8 L1187.5 151.1 L1188.0 150.7 L1188.5 151.0 L1189.0 151.1 L1189.5 150.8 L1190.0 150.9 L1190.5 151.0 L1191.0 151.0 L1191.5 150.8 L1192.0 150.7 L1192.5 150.9 L1193.0 150.8 L1193.5 151.0 L1194.0 150.8 L1194.5 150.9 L1195.0 151.0 L1195.5 151.1 L1196.0 150.8 L1196.5 150.9 L1197.0 151.0 L1197.5 151.1 L1198.0 150.8 L1198.5 151.2 L1199.0 151.0 L1199.5 150.9 L1200.0 151.0 L1200.5 150.8 L1201.0 150.7 L1201.5 151.0 L1202.0 150.9 L1202.5 150.9 L1203.0 150.9 L1203.5 151.1 L1204.0 151.1 L1204.5 150.7 L1205.0 151.0 L1205.5 150.9 L1206.0 150.9 L1206.5 151.1 L1207.0 150.9 L1207.5 150.9 L1208.0 151.1 L1208.5 150.9 L1209.0 150.9 L1209.5 150.9 L1210.0 151.1 L1210.5 151.0 L1211.0 151.1 L1211.5 150.9 L1212.0 150.7 L1212.5 151.0 L1213.0 151.0 L1213.5 151.1 L1214.0 151.1 L1214.5 150.7 L1215.0 150.8 L1215.5 150.7 L1216.0 151.1 L1216.5 150.7 L1217.0 150.7 L1217.5 151.1 L1218.0 151.0 L1218.5 150.7 L1219.0 151.0 L1219.5 151.1 L1220.0 150.9 L1220.5 150.7 L1221.0 151.0 L1221.5 150.9 L1222.0 151.0 L1222.5 151.2 L1223.0 151.1 L1223.5 151.1 L1224.0 150.8 L1224.5 150.9 L1225.0 151.0 L1225.5 150.7 L1226.0 151.2 L1226.5 150.8 L1227.0 150.8 L1227.5 150.9 L1228.0 150.8 L1228.5 151.1 L1229.0 151.0 L1229.5 151.0 L1230.0 150.9 L1230.5 150.7 L1231.0 150.9 L1231.5 151.1 L1232.0 151.1 L1232.5 151.1 L1233.0 150.8 L1233.5 150.8 L1234.0 150.7 L1234.5 151.0 L1235.0 150.9 L1235.5 151.0 L1236.0 151.0 L1236.5 151.0 L1237.0 150.9 L1237.5 151.1 L1238.0 150.8 L1238.5 151.2 L1239.0 151.0 L1239.5 150.8 L1240.0 150.9 L1240.5 151.0 L1241.0 150.9 L1241.5 151.0 L1242.0 150.9 L1242.5 150.9 L1243.0 151.1 L1243.5 150.9 L1244.0 151.1 L1244.5 151.1 L1245.0 151.0 L1245.5 151.0 L1246.0 151.2 L1246.5 151.0 L1247.0 151.2 L1247.5 150.8 L1248.0 151.0 L1248.5 151.1 L1249.0 150.8 L1249.5 151.2 L1250.0 150.8 L1250.5 151.0 L1251.0 150.8 L1251.5 151.2 L1252.0 151.0 L1252.5 151.1 L1253.0 151.0 L1253.5 151.1 L1254.0 151.1 L1254.5 150.9 L1255.0 150.9 L1255.5 151.2 L1256.0 150.8 L1256.5 151.2 L1257.0 150.9 L1257.5 150.8 L1258.0 150.8 L1258.5 151.2 L1259.0 151.2 L1259.5 151.0 L1260.0 151.1 L1260.5 150.9 L1261.0 151.2 L1261.5 151.1 L1262.0 150.8 L1262.5 150.8 L1263.0 151.1 L1263.5 150.8 L1264.0 151.2 L1264.5 150.9 L1265.0 150.9 L1265.5 151.1 L1266.0 150.9 L1266.5 151.1 L1267.0 150.8 L1267.5 151.2 L1268.0 150.9 L1268.5 151.2 L1269.0 150.9 L1269.5 151.2 L1270.0 151.3 L1270.5 151.0 L1271.0 150.8 L1271.5 151.0 L1272.0 151.1 L1272.5 150.9 L1273.0 151.1 L1273.5 150.8 L1274.0 151.0 L1274.5 151.1 L1275.0 151.0 L1275.5 151.1 L1276.0 150.8 L1276.5 151.2 L1277.0 150.8 L1277.5 151.2 L1278.0 151.3 L1278.5 151.3 L1279.0 151.1 L1279.5 150.9 L1280.0 151.0 L1280.5 151.2 L1281.0 151.0 L1281.5 151.3 L1282.0 150.8 L1282.5 151.0 L1283.0 151.2 L1283.5 151.1 L1284.0 151.1 L1284.5 150.8 L1285.0 150.9 L1285.5 150.9 L1286.0 151.2 L1286.5 151.2 L1287.0 150.9 L1287.5 151.3 L1288.0 150.8 L1288.5 151.1 L1289.0 151.3 L1289.5 151.0 L1290.0 151.3 L1290.5 151.1 L1291.0 150.8 L1291.5 151.0 L1292.0 151.0 L1292.5 150.9 L1293.0 151.2 L1293.5 150.9 L1294.0 151.2 L1294.5 151.0 L1295.0 150.9 L1295.5 151.1 L1296.0 150.9 L1296.5 151.1 L1297.0 151.2 L1297.5 151.1 L1298.0 151.1 L1298.5 150.8 L1299.0 151.1 L1299.5 150.9 L1300.0 151.1 L1300.5 150.9 L1301.0 151.1 L1301.5 151.0 L1302.0 151.0 L1302.5 151.2 L1303.0 150.9 L1303.5 150.9 L1304.0 151.3 L1304.5 151.0 L1305.0 151.3 L1305.5 151.3 L1306.0 151.1 L1306.5 150.9 L1307.0 150.9 L1307.5 151.3 L1308.0 150.9 L1308.5 151.1 L1309.0 151.1 L1309.5 150.9 L1310.0 151.1 L1310.5 150.9 L1311.0 151.1 L1311.5 151.1 L1312.0 151.0 L1312.5 150.9 L1313.0 151.0 L1313.5 150.9 L1314.0 150.9 L1314.5 151.0 L1315.0 151.3 L1315.5 151.1 L1316.0 151.3 L1316.5 150.9 L1317.0 151.3 L1317.5 151.1 L1318.0 151.2 L1318.5 151.1 L1319.0 151.2 L1319.5 151.0 L1320.0 151.2 L1320.5 150.9 L1321.0 151.0 L1321.5 150.9 L1322.0 151.1 L1322.5 151.1 L1323.0 151.0 L1323.5 151.3 L1324.0 150.9 L1324.5 151.2 L1325.0 151.0 L1325.5 151.2 L1326.0 151.3 L1326.5 151.2 L1327.0 150.9 L1327.5 151.0 L1328.0 151.2 L1328.5 151.4 L1329.0 150.9 L1329.5 151.2 L1330.0 151.2 L1330.5 151.3 L1331.0 151.0 L1331.5 151.3 L1332.0 151.1 L1332.5 151.3 L1333.0 150.9 L1333.5 151.3 L1334.0 151.1 L1334.5 151.1 L1335.0 150.9 L1335.5 151.0 L1336.0 151.2 L1336.5 151.2 L1337.0 151.0 L1337.5 151.1 L1338.0 151.0 L1338.5 151.0 L1339.0 151.0 L1339.5 151.1 L1340.0 151.4 L1340.5 151.4 L1341.0 151.3 L1341.5 151.1 L1342.0 151.1 L1342.5 151.3 L1343.0 151.3 L1343.5 151.3 L1344.0 151.2 L1344.5 151.0 L1345.0 151.2 L1345.5 151.3 L1346.0 151.3 L1346.5 150.9 L1347.0 151.3 L1347.5 151.1 L1348.0 151.0 L1348.5 151.4 L1349.0 151.2 L1349.5 151.3 L1350.0 151.0 L1350.5 151.3 L1351.0 151.4 L1351.5 151.4 L1352.0 151.3 L1352.5 151.3 L1353.0 151.3 L1353.5 151.2 L1354.0 151.1 L1354.5 151.3 L1355.0 151.3 L1355.5 151.3 L1356.0 151.1 L1356.5 151.4 L1357.0 151.2 L1357.5 151.4 L1358.0 151.0 L1358.5 151.4 L1359.0 151.3 L1359.5 151.0 L1360.0 151.3 L1360.5 151.0 L1361.0 151.0 L1361.5 151.1 L1362.0 151.0 L1362.5 151.2 L1363.0 151.4 L1363.5 151.3 L1364.0 151.3 L1364.5 151.1 L1365.0 151.3 L1365.5 151.3 L1366.0 151.3 L1366.5 151.4 L1367.0 151.3 L1367.5 151.1 L1368.0 151.0 L1368.5 151.3 L1369.0 151.3 L1369.5 151.1 L1370.0 151.2 L1370.5 151.4 L1371.0 151.3 L1371.5 150.9 L1372.0 151.2 L1372.5 150.9 L1373.0 151.0 L1373.5 151.3 L1374.0 151.1 L1374.5 151.2 L1375.0 151.2 L1375.5 151.1 L1376.0 151.0 L1376.5 151.1 L1377.0 151.4 L1377.5 151.3 L1378.0 151.1 L1378.5 151.0 L1379.0 151.1 L1379.5 151.3 L1380.0 151.2" fill="none" stroke="#dedede" stroke-width="1.3" stroke-linejoin="round"/></svg>
<div class="a" style="left:361px;top:343px;width:1px;height:3px;background:#ddd"></div>
<div class="fl" style="left:361.2px;top:346px;line-height:18px">230.3</div>
<div class="a" style="left:447px;top:343px;width:1px;height:3px;background:#ddd"></div>
<div class="fl" style="left:447.5px;top:346px;line-height:18px">230.5</div>
<div class="a" style="left:534px;top:343px;width:1px;height:3px;background:#ddd"></div>
<div class="fl" style="left:533.7px;top:346px;line-height:18px">230.8</div>
<div class="a" style="left:620px;top:343px;width:1px;height:3px;background:#ddd"></div>
<div class="fl" style="left:620.0px;top:346px;line-height:18px">231.0</div>
<div class="a" style="left:706px;top:343px;width:1px;height:3px;background:#ddd"></div>
<div class="fl" style="left:706.3px;top:346px;line-height:18px">231.3</div>
<div class="a" style="left:793px;top:343px;width:1px;height:3px;background:#ddd"></div>
<div class="fl" style="left:792.5px;top:346px;line-height:18px">231.5</div>
<div class="a" style="left:879px;top:343px;width:1px;height:3px;background:#ddd"></div>
<div class="fl" style="left:878.8px;top:346px;line-height:18px">231.8</div>
<div class="a" style="left:965px;top:343px;width:1px;height:3px;background:#ddd"></div>
<div class="fl" style="left:965.1px;top:346px;line-height:18px">232.0</div>
<div class="a" style="left:1051px;top:343px;width:1px;height:3px;background:#ddd"></div>
<div class="fl" style="left:1051.4px;top:346px;line-height:18px">232.3</div>
<div class="a" style="left:1138px;top:343px;width:1px;height:3px;background:#ddd"></div>
<div class="fl" style="left:1137.6px;top:346px;line-height:18px">232.5</div>
<div class="a" style="left:1224px;top:343px;width:1px;height:3px;background:#ddd"></div>
<div class="fl" style="left:1223.9px;top:346px;line-height:18px">232.8</div>
<div class="a" style="left:1310px;top:343px;width:1px;height:3px;background:#ddd"></div>
<div class="fl" style="left:1310.2px;top:346px;line-height:18px">233.0</div>
<div class="a" style="left:1396px;top:343px;width:1px;height:3px;background:#ddd"></div>
<div class="fl" style="left:1396.4px;top:346px;line-height:18px">233.3</div>
<div class="a" style="left:1483px;top:343px;width:1px;height:3px;background:#ddd"></div>
<div class="fl" style="left:1482.7px;top:346px;line-height:18px">233.5</div>
<div class="a" style="left:1569px;top:343px;width:1px;height:3px;background:#ddd"></div>
<div class="fl" style="left:1569.0px;top:346px;line-height:18px">233.8</div>
<div class="a" style="left:1620px;top:343px;width:34px;height:22px;overflow:hidden"><div class="a gl" style="left:15px;top:3px;font-size:17px;letter-spacing:-0.55px;line-height:18px;color:#e6e6e6">234.0</div></div>
<div class="a gl" style="left:289px;top:346px;font-size:11.5px;letter-spacing:0.10px;line-height:13px;color:#f0f0f0;font-kerning:none">-30.2dB</div>
<div class="a gl" style="left:283px;top:502px;font-size:11.5px;letter-spacing:0.04px;line-height:13px;color:#f0f0f0;font-kerning:none">-109.1dB</div>
<div class="a gl" style="left:966px;top:496px;font-size:17px;letter-spacing:-0.4px;line-height:18px;color:#c2c2c2">232.004</div>
<div class="a gl" style="left:1170.5px;top:496px;font-size:17px;letter-spacing:-0.4px;line-height:18px;color:#c2c2c2">232.596</div>
<div class="a" style="left:275px;top:517px;width:1404px;height:5px;background:#f0f0f0"></div>
<div class="a" style="left:275px;top:522px;width:1380px;height:501px;background:linear-gradient(90deg,#000000 0.0px,#000004 285.0px,#00000e 365.0px,#00001a 405.0px,#000026 445.0px,#00002c 525.0px,#000030 625.0px,#000038 660.0px,#000048 675.0px,#000064 682.0px,#000098 687.0px,#0000c0 689.0px,#000094 697.0px,#000068 701.0px,#00004c 707.0px,#00003a 717.0px,#000031 735.0px,#00002d 825.0px,#000029 925.0px,#000021 975.0px,#000011 1005.0px,#000004 1025.0px,#000000 1055.0px,#000000 1380.0px)"></div>
<div class="a" style="left:275px;top:522px;width:1380px;height:501px;overflow:hidden"><div class="a" style="left:798px;top:0;width:2px;height:501px;background:rgba(0,0,0,0.18)"></div><div class="a" style="left:618px;top:0;width:4px;height:501px;background:rgba(0,0,0,0.25)"></div><div class="a" style="left:986px;top:0;width:3px;height:501px;background:rgba(10,10,160,0.13)"></div><div class="a" style="left:938px;top:0;width:4px;height:501px;background:rgba(0,0,0,0.23)"></div><div class="a" style="left:985px;top:0;width:1px;height:501px;background:rgba(10,10,160,0.30)"></div><div class="a" style="left:922px;top:0;width:2px;height:501px;background:rgba(0,0,0,0.25)"></div><div class="a" style="left:380px;top:0;width:2px;height:501px;background:rgba(10,10,160,0.02)"></div><div class="a" style="left:738px;top:0;width:2px;height:501px;background:rgba(0,0,0,0.33)"></div><div class="a" style="left:1003px;top:0;width:5px;height:501px;background:rgba(0,0,0,0.12)"></div><div class="a" style="left:465px;top:0;width:5px;height:501px;background:rgba(0,0,0,0.21)"></div><div class="a" style="left:428px;top:0;width:4px;height:501px;background:rgba(0,0,0,0.15)"></div><div class="a" style="left:609px;top:0;width:5px;height:501px;background:rgba(0,0,0,0.31)"></div><div class="a" style="left:974px;top:0;width:5px;height:501px;background:rgba(0,0,0,0.16)"></div><div class="a" style="left:692px;top:0;width:2px;height:501px;background:rgba(0,0,0,0.15)"></div><div class="a" style="left:733px;top:0;width:1px;height:501px;background:rgba(10,10,160,0.31)"></div><div class="a" style="left:841px;top:0;width:4px;height:501px;background:rgba(0,0,0,0.16)"></div><div class="a" style="left:685px;top:0;width:2px;height:501px;background:rgba(10,10,160,0.36)"></div><div class="a" style="left:471px;top:0;width:1px;height:501px;background:rgba(10,10,160,0.26)"></div><div class="a" style="left:1012px;top:0;width:2px;height:501px;background:rgba(10,10,160,0.04)"></div><div class="a" style="left:777px;top:0;width:1px;height:501px;background:rgba(10,10,160,0.32)"></div><div class="a" style="left:646px;top:0;width:5px;height:501px;background:rgba(0,0,0,0.31)"></div><div class="a" style="left:692px;top:0;width:4px;height:501px;background:rgba(0,0,0,0.24)"></div><div class="a" style="left:585px;top:0;width:2px;height:501px;background:rgba(0,0,0,0.27)"></div><div class="a" style="left:882px;top:0;width:3px;height:501px;background:rgba(10,10,160,0.14)"></div><div class="a" style="left:891px;top:0;width:3px;height:501px;background:rgba(10,10,160,0.19)"></div><div class="a" style="left:488px;top:0;width:2px;height:501px;background:rgba(10,10,160,0.11)"></div><div class="a" style="left:995px;top:0;width:3px;height:501px;background:rgba(0,0,0,0.13)"></div><div class="a" style="left:552px;top:0;width:4px;height:501px;background:rgba(0,0,0,0.27)"></div><div class="a" style="left:967px;top:0;width:2px;height:501px;background:rgba(10,10,160,0.29)"></div><div class="a" style="left:629px;top:0;width:2px;height:501px;background:rgba(10,10,160,0.37)"></div><div class="a" style="left:451px;top:0;width:5px;height:501px;background:rgba(0,0,0,0.26)"></div><div class="a" style="left:783px;top:0;width:3px;height:501px;background:rgba(0,0,0,0.23)"></div><div class="a" style="left:557px;top:0;width:2px;height:501px;background:rgba(10,10,160,0.29)"></div><div class="a" style="left:856px;top:0;width:2px;height:501px;background:rgba(10,10,160,0.20)"></div><div class="a" style="left:715px;top:0;width:2px;height:501px;background:rgba(10,10,160,0.28)"></div><div class="a" style="left:665px;top:0;width:3px;height:501px;background:rgba(10,10,160,0.25)"></div><div class="a" style="left:573px;top:0;width:1px;height:501px;background:rgba(10,10,160,0.20)"></div><div class="a" style="left:941px;top:0;width:5px;height:501px;background:rgba(0,0,0,0.17)"></div><div class="a" style="left:908px;top:0;width:3px;height:501px;background:rgba(0,0,0,0.38)"></div><div class="a" style="left:788px;top:0;width:2px;height:501px;background:rgba(0,0,0,0.31)"></div><div class="a" style="left:870px;top:0;width:2px;height:501px;background:rgba(10,10,160,0.36)"></div><div class="a" style="left:633px;top:0;width:1px;height:501px;background:rgba(10,10,160,0.19)"></div><div class="a" style="left:831px;top:0;width:2px;height:501px;background:rgba(10,10,160,0.31)"></div><div class="a" style="left:804px;top:0;width:4px;height:501px;background:rgba(0,0,0,0.18)"></div><div class="a" style="left:812px;top:0;width:2px;height:501px;background:rgba(0,0,0,0.17)"></div><div class="a" style="left:919px;top:0;width:5px;height:501px;background:rgba(0,0,0,0.29)"></div><div class="a" style="left:515px;top:0;width:3px;height:501px;background:rgba(0,0,0,0.35)"></div><div class="a" style="left:476px;top:0;width:2px;height:501px;background:rgba(0,0,0,0.34)"></div><div class="a" style="left:949px;top:0;width:5px;height:501px;background:rgba(0,0,0,0.34)"></div><div class="a" style="left:936px;top:0;width:2px;height:501px;background:rgba(10,10,160,0.30)"></div><div class="a" style="left:768px;top:0;width:3px;height:501px;background:rgba(10,10,160,0.12)"></div><div class="a" style="left:763px;top:0;width:1px;height:501px;background:rgba(10,10,160,0.27)"></div><div class="a" style="left:576px;top:0;width:1px;height:501px;background:rgba(10,10,160,0.26)"></div><div class="a" style="left:608px;top:0;width:4px;height:501px;background:rgba(0,0,0,0.17)"></div><div class="a" style="left:518px;top:0;width:2px;height:501px;background:rgba(10,10,160,0.31)"></div><div class="a" style="left:554px;top:0;width:3px;height:501px;background:rgba(10,10,160,0.22)"></div><div class="a" style="left:757px;top:0;width:2px;height:501px;background:rgba(10,10,160,0.25)"></div><div class="a" style="left:450px;top:0;width:2px;height:501px;background:rgba(10,10,160,0.23)"></div><div class="a" style="left:991px;top:0;width:3px;height:501px;background:rgba(10,10,160,0.11)"></div><div class="a" style="left:882px;top:0;width:3px;height:501px;background:rgba(10,10,160,0.34)"></div><div class="a" style="left:720px;top:0;width:1px;height:501px;background:rgba(10,10,160,0.32)"></div><div class="a" style="left:893px;top:0;width:2px;height:501px;background:rgba(10,10,160,0.20)"></div><div class="a" style="left:839px;top:0;width:3px;height:501px;background:rgba(10,10,160,0.21)"></div><div class="a" style="left:984px;top:0;width:1px;height:501px;background:rgba(10,10,160,0.23)"></div><div class="a" style="left:889px;top:0;width:4px;height:501px;background:rgba(0,0,0,0.23)"></div><div class="a" style="left:425px;top:0;width:2px;height:501px;background:rgba(10,10,160,0.08)"></div><div class="a" style="left:993px;top:0;width:3px;height:501px;background:rgba(0,0,0,0.18)"></div><div class="a" style="left:596px;top:0;width:2px;height:501px;background:rgba(10,10,160,0.21)"></div><div class="a" style="left:861px;top:0;width:1px;height:501px;background:rgba(10,10,160,0.35)"></div><div class="a" style="left:658px;top:0;width:1px;height:501px;background:rgba(10,10,160,0.30)"></div><div class="a" style="left:870px;top:0;width:2px;height:501px;background:rgba(10,10,160,0.31)"></div><div class="a" style="left:853px;top:0;width:2px;height:501px;background:rgba(0,0,0,0.38)"></div><div class="a" style="left:420px;top:0;width:3px;height:501px;background:rgba(10,10,160,0.05)"></div><div class="a" style="left:547px;top:0;width:2px;height:501px;background:rgba(10,10,160,0.15)"></div><div class="a" style="left:1008px;top:0;width:1px;height:501px;background:rgba(10,10,160,0.03)"></div><div class="a" style="left:818px;top:0;width:2px;height:501px;background:rgba(10,10,160,0.11)"></div><div class="a" style="left:869px;top:0;width:2px;height:501px;background:rgba(10,10,160,0.34)"></div><div class="a" style="left:872px;top:0;width:2px;height:501px;background:rgba(10,10,160,0.38)"></div><div class="a" style="left:883px;top:0;width:1px;height:501px;background:rgba(10,10,160,0.33)"></div><div class="a" style="left:918px;top:0;width:2px;height:501px;background:rgba(10,10,160,0.17)"></div><div class="a" style="left:512px;top:0;width:1px;height:501px;background:rgba(10,10,160,0.11)"></div><div class="a" style="left:830px;top:0;width:5px;height:501px;background:rgba(0,0,0,0.40)"></div><div class="a" style="left:870px;top:0;width:5px;height:501px;background:rgba(0,0,0,0.19)"></div><div class="a" style="left:465px;top:0;width:3px;height:501px;background:rgba(10,10,160,0.16)"></div><div class="a" style="left:716px;top:0;width:1px;height:501px;background:rgba(10,10,160,0.33)"></div><div class="a" style="left:674px;top:0;width:3px;height:501px;background:rgba(10,10,160,0.35)"></div><div class="a" style="left:958px;top:0;width:5px;height:501px;background:rgba(0,0,0,0.23)"></div><div class="a" style="left:687px;top:0;width:3px;height:501px;background:rgba(0,0,0,0.20)"></div><div class="a" style="left:509px;top:0;width:1px;height:501px;background:rgba(10,10,160,0.35)"></div><div class="a" style="left:754px;top:0;width:2px;height:501px;background:rgba(10,10,160,0.16)"></div><div class="a" style="left:742px;top:0;width:5px;height:501px;background:rgba(0,0,0,0.32)"></div><div class="a" style="left:862px;top:0;width:2px;height:501px;background:rgba(10,10,160,0.30)"></div><div class="a" style="left:487px;top:0;width:3px;height:501px;background:rgba(0,0,0,0.37)"></div><div class="a" style="left:834px;top:0;width:3px;height:501px;background:rgba(10,10,160,0.35)"></div><div class="a" style="left:470px;top:0;width:2px;height:501px;background:rgba(0,0,0,0.30)"></div><div class="a" style="left:823px;top:0;width:2px;height:501px;background:rgba(0,0,0,0.37)"></div><div class="a" style="left:628px;top:0;width:2px;height:501px;background:rgba(0,0,0,0.36)"></div><div class="a" style="left:534px;top:0;width:2px;height:501px;background:rgba(0,0,0,0.20)"></div><div class="a" style="left:404px;top:0;width:1px;height:501px;background:rgba(10,10,160,0.05)"></div><div class="a" style="left:871px;top:0;width:3px;height:501px;background:rgba(10,10,160,0.26)"></div><div class="a" style="left:962px;top:0;width:1px;height:501px;background:rgba(10,10,160,0.14)"></div><div class="a" style="left:683px;top:0;width:2px;height:501px;background:rgba(0,0,0,0.34)"></div><div class="a" style="left:498px;top:0;width:4px;height:501px;background:rgba(0,0,0,0.19)"></div><div class="a" style="left:447px;top:0;width:2px;height:501px;background:rgba(0,0,0,0.30)"></div><div class="a" style="left:426px;top:0;width:1px;height:501px;background:rgba(10,10,160,0.16)"></div><div class="a" style="left:698px;top:0;width:3px;height:501px;background:rgba(10,10,160,0.27)"></div><div class="a" style="left:429px;top:0;width:2px;height:501px;background:rgba(10,10,160,0.15)"></div><div class="a" style="left:669px;top:0;width:3px;height:501px;background:rgba(0,0,0,0.29)"></div><div class="a" style="left:395px;top:0;width:5px;height:501px;background:rgba(0,0,0,0.08)"></div><div class="a" style="left:512px;top:0;width:5px;height:501px;background:rgba(0,0,0,0.33)"></div><div class="a" style="left:1002px;top:0;width:3px;height:501px;background:rgba(10,10,160,0.05)"></div><div class="a" style="left:603px;top:0;width:1px;height:501px;background:rgba(10,10,160,0.30)"></div><div class="a" style="left:437px;top:0;width:2px;height:501px;background:rgba(10,10,160,0.13)"></div><div class="a" style="left:474px;top:0;width:1px;height:501px;background:rgba(10,10,160,0.37)"></div><div class="a" style="left:384px;top:0;width:3px;height:501px;background:rgba(10,10,160,0.01)"></div><div class="a" style="left:515px;top:0;width:3px;height:501px;background:rgba(10,10,160,0.38)"></div><div class="a" style="left:744px;top:0;width:1px;height:501px;background:rgba(10,10,160,0.31)"></div><div class="a" style="left:958px;top:0;width:2px;height:501px;background:rgba(0,0,0,0.33)"></div><div class="a" style="left:804px;top:0;width:1px;height:501px;background:rgba(10,10,160,0.36)"></div><div class="a" style="left:494px;top:0;width:3px;height:501px;background:rgba(0,0,0,0.26)"></div><div class="a" style="left:540px;top:0;width:2px;height:501px;background:rgba(10,10,160,0.20)"></div><div class="a" style="left:622px;top:0;width:2px;height:501px;background:rgba(10,10,160,0.15)"></div><div class="a" style="left:863px;top:0;width:4px;height:501px;background:rgba(0,0,0,0.40)"></div><div class="a" style="left:554px;top:0;width:1px;height:501px;background:rgba(10,10,160,0.22)"></div><div class="a" style="left:596px;top:0;width:2px;height:501px;background:rgba(10,10,160,0.20)"></div><div class="a" style="left:381px;top:0;width:4px;height:501px;background:rgba(0,0,0,0.01)"></div><div class="a" style="left:883px;top:0;width:2px;height:501px;background:rgba(10,10,160,0.13)"></div><div class="a" style="left:649px;top:0;width:1px;height:501px;background:rgba(10,10,160,0.12)"></div><div class="a" style="left:991px;top:0;width:3px;height:501px;background:rgba(10,10,160,0.16)"></div><div class="a" style="left:535px;top:0;width:2px;height:501px;background:rgba(0,0,0,0.38)"></div><div class="a" style="left:790px;top:0;width:1px;height:501px;background:rgba(10,10,160,0.31)"></div><div class="a" style="left:832px;top:0;width:1px;height:501px;background:rgba(10,10,160,0.13)"></div><div class="a" style="left:767px;top:0;width:2px;height:501px;background:rgba(10,10,160,0.15)"></div><div class="a" style="left:857px;top:0;width:1px;height:501px;background:rgba(10,10,160,0.17)"></div><div class="a" style="left:438px;top:0;width:3px;height:501px;background:rgba(0,0,0,0.22)"></div><div class="a" style="left:795px;top:0;width:2px;height:501px;background:rgba(10,10,160,0.29)"></div><div class="a" style="left:429px;top:0;width:2px;height:501px;background:rgba(0,0,0,0.17)"></div><div class="a" style="left:609px;top:0;width:2px;height:501px;background:rgba(10,10,160,0.13)"></div><div class="a" style="left:790px;top:0;width:2px;height:501px;background:rgba(10,10,160,0.35)"></div><div class="a" style="left:493px;top:0;width:2px;height:501px;background:rgba(10,10,160,0.18)"></div><div class="a" style="left:821px;top:0;width:1px;height:501px;background:rgba(10,10,160,0.38)"></div><div class="a" style="left:925px;top:0;width:1px;height:501px;background:rgba(10,10,160,0.19)"></div><div class="a" style="left:399px;top:0;width:3px;height:501px;background:rgba(0,0,0,0.06)"></div><div class="a" style="left:888px;top:0;width:2px;height:501px;background:rgba(0,0,0,0.22)"></div><div class="a" style="left:915px;top:0;width:3px;height:501px;background:rgba(10,10,160,0.13)"></div><div class="a" style="left:577px;top:0;width:2px;height:501px;background:rgba(10,10,160,0.11)"></div><div class="a" style="left:441px;top:0;width:2px;height:501px;background:rgba(0,0,0,0.18)"></div><div class="a" style="left:741px;top:0;width:1px;height:501px;background:rgba(10,10,160,0.12)"></div><div class="a" style="left:550px;top:0;width:4px;height:501px;background:rgba(0,0,0,0.38)"></div><div class="a" style="left:610px;top:0;width:4px;height:501px;background:rgba(0,0,0,0.18)"></div></div>
<div class="a" style="left:554.2px;top:522px;width:3px;height:501px;background:linear-gradient(90deg,rgba(8,8,110,0),rgba(8,8,110,.5) 35%,rgba(8,8,110,.5) 65%,rgba(8,8,110,0))"></div>
<div class="a" style="left:656.7px;top:522px;width:3.4px;height:501px;background:linear-gradient(90deg,rgba(10,10,140,0),rgba(10,10,140,.8) 35%,rgba(10,10,140,.8) 65%,rgba(10,10,140,0))"></div>
<div class="a" style="left:758.8px;top:522px;width:4.4px;height:501px;background:linear-gradient(90deg,rgba(10,12,170,0),rgba(10,12,170,.85) 35%,rgba(10,12,170,.85) 65%,rgba(10,12,170,0))"></div>
<div class="a" style="left:863.3px;top:522px;width:2.4px;height:501px;background:linear-gradient(90deg,rgba(16,80,170,0),rgba(16,80,170,.9) 35%,rgba(16,80,170,.9) 65%,rgba(16,80,170,0))"></div>
<div class="a" style="left:1066.8px;top:522px;width:4.4px;height:501px;background:linear-gradient(90deg,rgba(12,14,180,0),rgba(12,14,180,.85) 35%,rgba(12,14,180,.85) 65%,rgba(12,14,180,0))"></div>
<div class="a" style="left:1272.7px;top:522px;width:3.6px;height:501px;background:linear-gradient(90deg,rgba(12,16,190,0),rgba(12,16,190,.9) 35%,rgba(12,16,190,.9) 65%,rgba(12,16,190,0))"></div>
<div class="a" style="left:1376.4px;top:522px;width:2px;height:501px;background:linear-gradient(90deg,rgba(6,24,70,0),rgba(6,24,70,.7) 35%,rgba(6,24,70,.7) 65%,rgba(6,24,70,0))"></div>
<div class="a" style="left:1650.2px;top:522px;width:1.5px;height:501px;background:linear-gradient(90deg,rgba(0,24,40,0),rgba(0,24,40,.35) 35%,rgba(0,24,40,.35) 65%,rgba(0,24,40,0))"></div>
<div class="a" style="left:964px;top:522px;width:3.4px;height:501px;background:linear-gradient(90deg,#b4f8b4,#86eeb0 45%,#18b0a0)"></div>
<div class="a" style="left:967.4px;top:522px;width:2.6px;height:501px;background:#0404c4"></div>
<div class="a" style="left:970px;top:522px;width:1.8px;height:501px;background:#8c8cff"></div>
<div class="a" style="left:1170px;top:522px;width:3px;height:501px;background:linear-gradient(90deg,#fff,#dce8ff)"></div>
<div class="a gl" style="left:954px;top:1000px;font-size:16px;letter-spacing:-1.6px;line-height:18px;color:#f0f0f0">USB</div>
<div class="a gl" style="left:1157px;top:1000px;font-size:16px;letter-spacing:-1.6px;line-height:18px;color:#f0f0f0">USB</div>
<div class="a" style="left:1655px;top:343px;width:1px;height:174px;background:#e8e8e8"></div>
<div class="a" style="left:1656px;top:343px;width:23px;height:174px;background:#0f0f0f"></div>
<div class="a mono" style="left:1656px;top:343px;width:22px;height:30px;text-align:center;color:#17a02c;font-size:18px;line-height:30px">P</div>
<div class="a" style="left:1656px;top:373px;width:23px;height:1px;background:#e8e8e8"></div>
<div class="a" style="left:1656px;top:374px;width:23px;height:143px;background:linear-gradient(90deg,#202020,#363636 50%,#242424)"></div>
<div class="a" style="left:1656px;top:407px;width:23px;height:110px;background:linear-gradient(90deg,#00aa28,#04e23c 50%,#00aa28)"></div>
<div class="a" style="left:1655px;top:522px;width:1px;height:501px;background:#e8e8e8"></div>
<div class="a" style="left:1656px;top:522px;width:23px;height:501px;background:linear-gradient(90deg,#202020,#363636 50%,#242424)"></div>
<div class="a" style="left:1656px;top:915px;width:23px;height:108px;background:linear-gradient(90deg,#00aa28,#04e23c 50%,#00aa28)"></div>
<div class="a" style="left:1px;top:1023px;width:1678px;height:29px;background:#f0f0f0"></div>
<div class="a ui" style="left:3.8px;top:1029px;font-size:15.0px;letter-spacing:-0.109px;line-height:20px;color:#111;">Solo Mode Toggle</div>
<svg class="a" style="left:1664px;top:1037px" width="14" height="14"><rect x="10" y="2" width="2" height="2" fill="#cfcfcf"/><rect x="10" y="6" width="2" height="2" fill="#cfcfcf"/><rect x="10" y="10" width="2" height="2" fill="#cfcfcf"/><rect x="6" y="6" width="2" height="2" fill="#cfcfcf"/><rect x="6" y="10" width="2" height="2" fill="#cfcfcf"/><rect x="2" y="10" width="2" height="2" fill="#cfcfcf"/></svg>
<div class="a" style="left:0;top:0;width:1680px;height:1px;background:#106b88"></div>
<div class="a" style="left:1px;top:1px;width:1678px;height:1px;background:rgba(150,230,245,.55)"></div>
<div class="a" style="left:0;top:0;width:1px;height:1052px;background:linear-gradient(180deg,#106b88,#0b74a4 30%,#0b74a4)"></div>
<div class="a" style="left:1px;top:1px;width:1px;height:1051px;background:linear-gradient(180deg,rgba(150,230,245,.6),rgba(150,230,245,.6) 62px,rgba(80,160,205,.8) 64px,rgba(80,160,205,.8))"></div>
<div class="a" style="left:1679px;top:0;width:1px;height:1052px;background:linear-gradient(180deg,#106b88,#1a78a4 30%,#1a78a4)"></div>
<div class="a" style="left:1678px;top:64px;width:1px;height:959px;background:rgba(0,60,100,.6)"></div>
</body></html>
